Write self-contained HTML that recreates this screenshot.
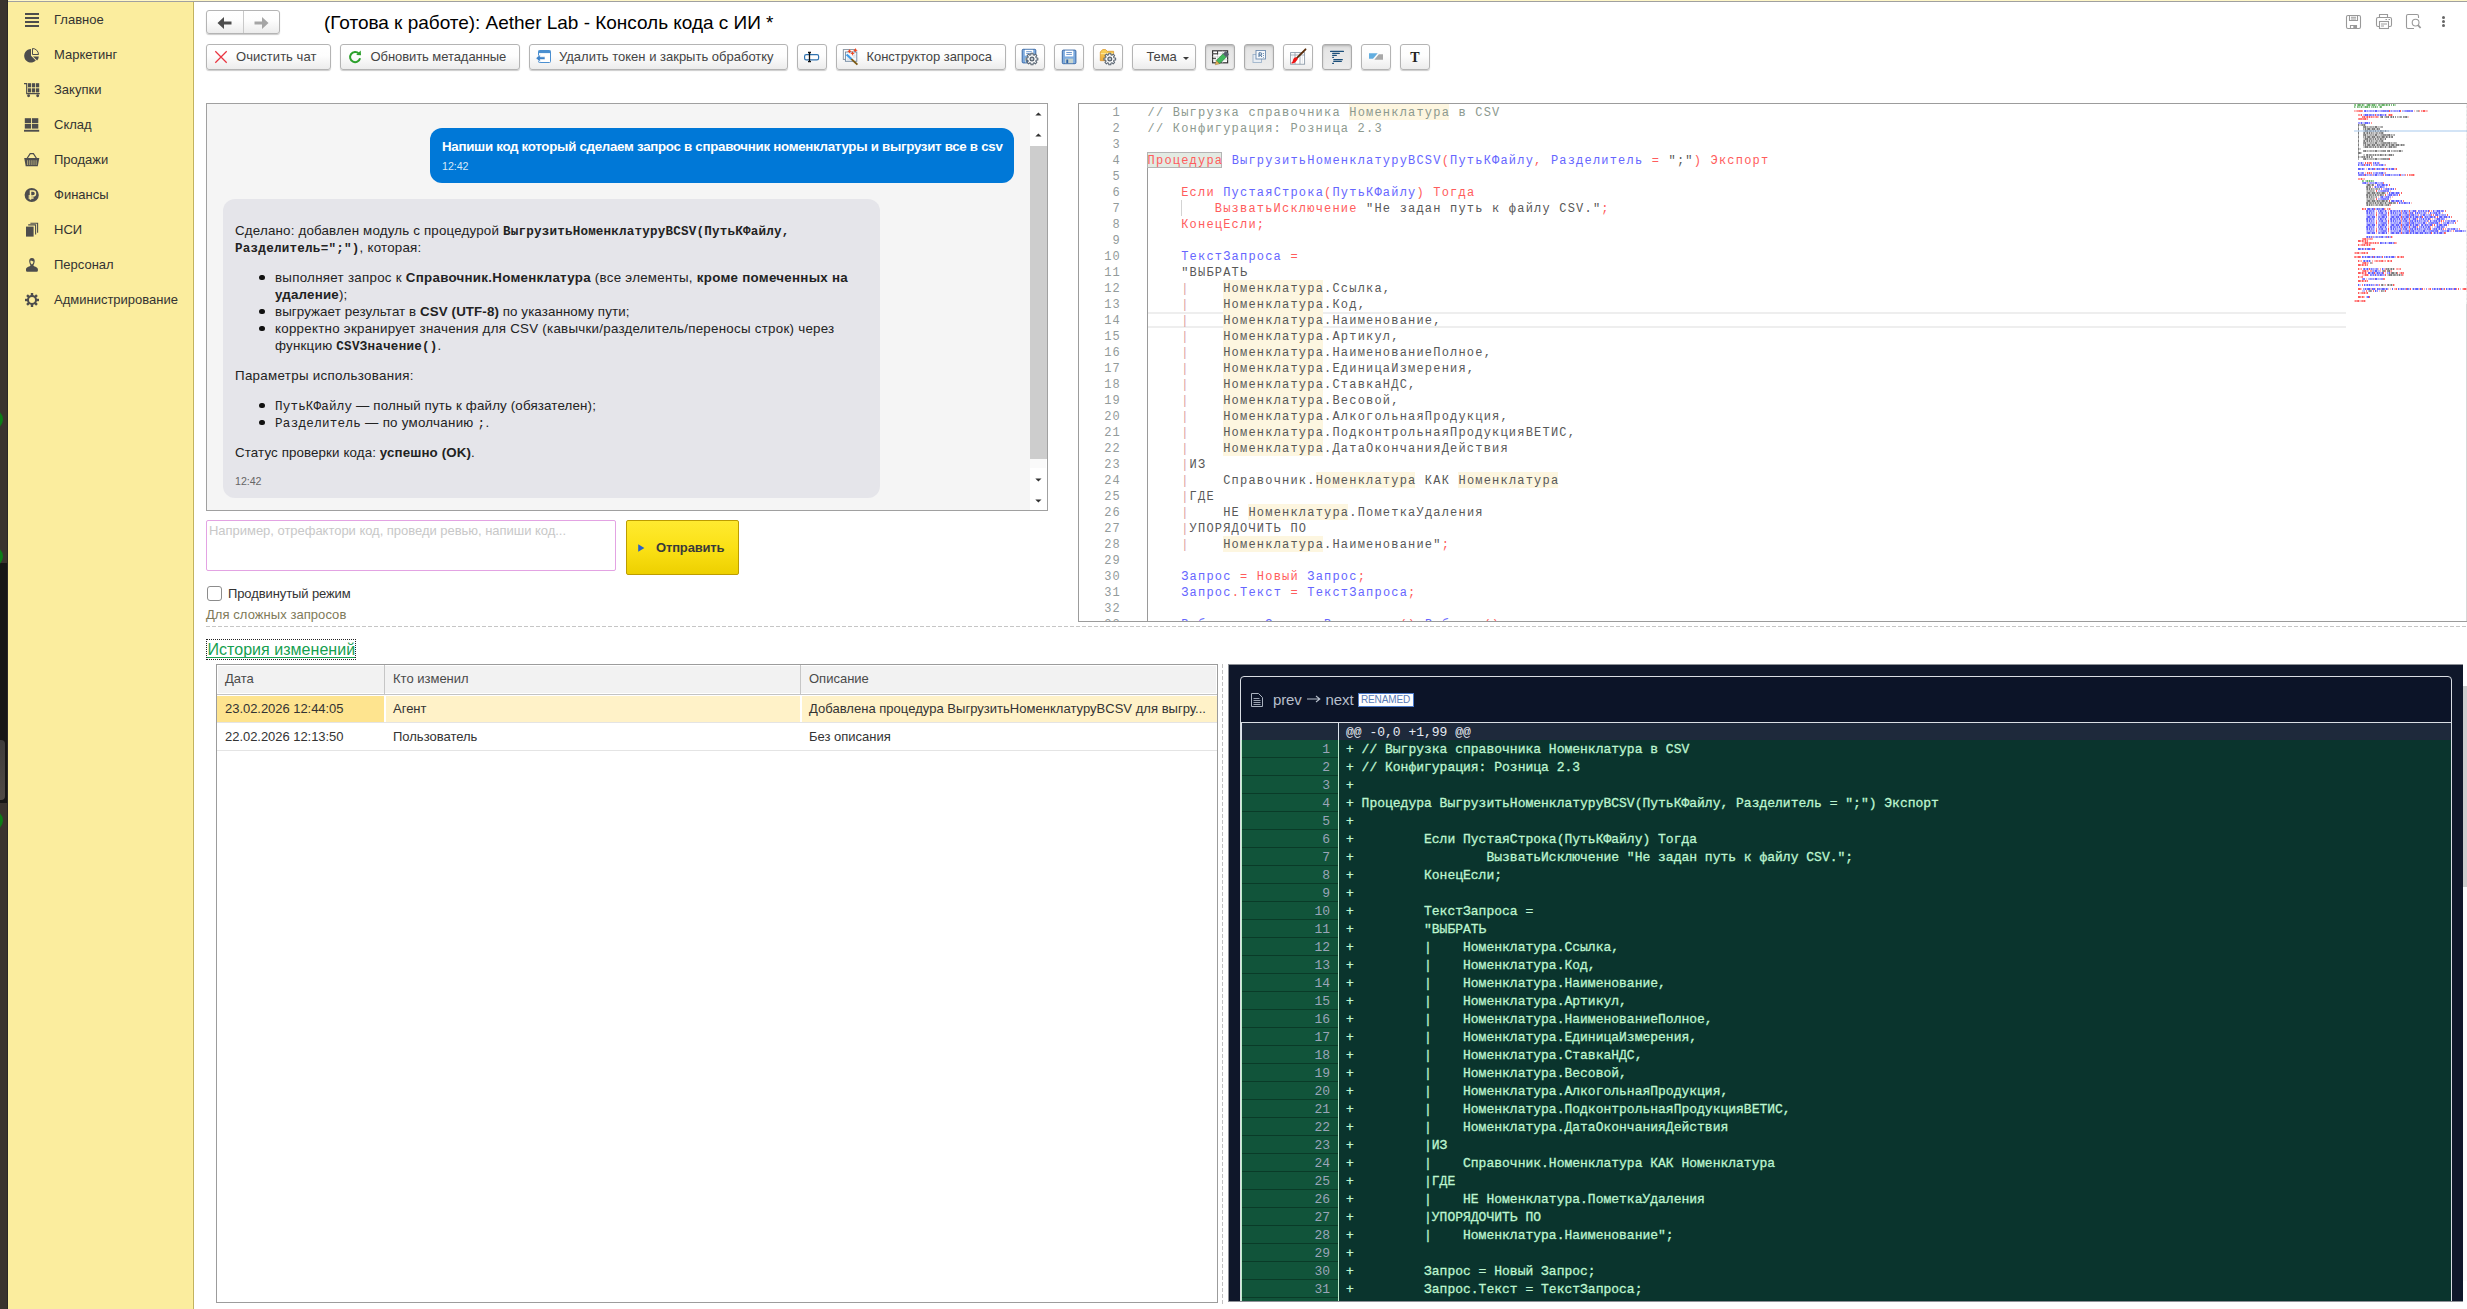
<!DOCTYPE html>
<html lang="ru"><head><meta charset="utf-8"><title>Aether Lab</title><style>
html,body{margin:0;padding:0;background:#fff}
body{width:2467px;height:1309px;position:relative;overflow:hidden;font-family:'Liberation Sans',sans-serif}
div,svg,span.t,span.ln,span.cl,span.dl,span.dn{position:absolute}
span.t{white-space:pre}
span.ln{left:0;width:43px;text-align:right;font:12px/16px 'Liberation Mono',monospace;letter-spacing:1.2px;color:#929a9a}
span.cl{left:69.59999999999991px;white-space:pre;font:12px/16px 'Liberation Mono',monospace;letter-spacing:1.2px}
span.dl{left:105px;white-space:pre;font:13px/18px 'Liberation Mono',monospace;color:#bdf5d0;-webkit-text-stroke:0.3px #bdf5d0}
span.dn{left:0;width:89px;text-align:right;font:13px/18px 'Liberation Mono',monospace;color:#9aa5b8}
</style></head>
<body>
<div style="left:0px;top:0px;width:8px;height:1309px;background:#3a332e"></div>
<div style="left:0px;top:563px;width:8px;height:240px;background:#171615"></div>
<div style="left:-5px;top:740px;width:10px;height:60px;background:linear-gradient(#3e3c3b,#514a45);border-radius:4px"></div>
<div style="left:-18px;top:408.5px;width:21px;height:21px;background:#0c7d16;border-radius:50%"></div>
<div style="left:-18px;top:545.5px;width:21px;height:21px;background:#0c7d16;border-radius:50%"></div>
<div style="left:-18px;top:809.5px;width:21px;height:21px;background:#0c7d16;border-radius:50%"></div>
<div style="left:7px;top:0px;width:1px;height:1309px;background:#2b2724"></div>
<div style="left:8px;top:0px;width:185px;height:1309px;background:#fbed9e"></div>
<div style="left:192px;top:0px;width:1px;height:1309px;background:#fdf09c"></div>
<div style="left:193px;top:0px;width:1px;height:1309px;background:#c2b260"></div>
<div style="left:8px;top:0px;width:2459px;height:1px;background:#fff7c8"></div>
<div style="left:8px;top:1px;width:2459px;height:1px;background:#a0a0a0"></div>
<span class="t" style="left:54px;top:11.5px;font-family:'Liberation Sans',sans-serif;font-size:13px;line-height:16px;color:#333;">Главное</span>
<span class="t" style="left:54px;top:46.5px;font-family:'Liberation Sans',sans-serif;font-size:13px;line-height:16px;color:#333;">Маркетинг</span>
<span class="t" style="left:54px;top:81.5px;font-family:'Liberation Sans',sans-serif;font-size:13px;line-height:16px;color:#333;">Закупки</span>
<span class="t" style="left:54px;top:116.5px;font-family:'Liberation Sans',sans-serif;font-size:13px;line-height:16px;color:#333;">Склад</span>
<span class="t" style="left:54px;top:151.5px;font-family:'Liberation Sans',sans-serif;font-size:13px;line-height:16px;color:#333;">Продажи</span>
<span class="t" style="left:54px;top:186.5px;font-family:'Liberation Sans',sans-serif;font-size:13px;line-height:16px;color:#333;">Финансы</span>
<span class="t" style="left:54px;top:221.5px;font-family:'Liberation Sans',sans-serif;font-size:13px;line-height:16px;color:#333;">НСИ</span>
<span class="t" style="left:54px;top:256.5px;font-family:'Liberation Sans',sans-serif;font-size:13px;line-height:16px;color:#333;">Персонал</span>
<span class="t" style="left:54px;top:291.5px;font-family:'Liberation Sans',sans-serif;font-size:13px;line-height:16px;color:#333;">Администрирование</span>
<svg style="left:24px;top:12px;" width="16" height="16" viewBox="0 0 16 16"><g fill="#4d4d4d" stroke="none"><rect x="1" y="1" width="14" height="2"/><rect x="1" y="5" width="14" height="2"/><rect x="1" y="9" width="14" height="2"/><rect x="1" y="13" width="14" height="2"/></g></svg>
<svg style="left:24px;top:47px;" width="16" height="16" viewBox="0 0 16 16"><g fill="#4d4d4d" stroke="none"><path d="M7,8.8 L7,2 A6.8,6.8 0 1 0 11.8,13.6 Z"/><path d="M9,9.4 L14.8,9.4 A6.8,6.8 0 0 1 13.1,13.4 Z"/><path d="M8.5,1.5 A6,6 0 0 1 14.5,7.5 L8.5,7.5 Z" fill="none" stroke="#4d4d4d" stroke-width="1"/></g></svg>
<svg style="left:24px;top:82px;" width="16" height="16" viewBox="0 0 16 16"><g fill="#4d4d4d" stroke="none"><path d="M0,1.7 H2.7 V11.6 H15.8" fill="none" stroke="#4d4d4d" stroke-width="1.2"/><rect x="4" y="1.2" width="3.2" height="4.1"/><rect x="8" y="1.2" width="3.2" height="4.1"/><rect x="12" y="1.2" width="3.2" height="4.1"/><rect x="4" y="6.3" width="3.2" height="4.1"/><rect x="8" y="6.3" width="3.2" height="4.1"/><rect x="12" y="6.3" width="3.2" height="4.1"/><circle cx="4.6" cy="13.8" r="1.45"/><circle cx="13.7" cy="13.8" r="1.45"/></g></svg>
<svg style="left:24px;top:117px;" width="16" height="16" viewBox="0 0 16 16"><g fill="#4d4d4d" stroke="none"><rect x="0.8" y="1.2" width="6.3" height="4.8"/><rect x="8.0" y="1.2" width="6.3" height="4.8"/><rect x="0.8" y="6.8" width="6.3" height="4.8"/><rect x="8.0" y="6.8" width="6.3" height="4.8"/><rect x="0" y="12.8" width="15.2" height="1.9"/></g></svg>
<svg style="left:24px;top:152px;" width="16" height="16" viewBox="0 0 16 16"><g fill="#4d4d4d" stroke="none"><path d="M3,6.5 L6.2,1.6 H9.4 L12.6,6.5" fill="none" stroke="#4d4d4d" stroke-width="1.2"/><path d="M0.2,6 H15.3 L13.8,14.2 H1.7 Z"/><rect x="3.3" y="8.2" width="0.8" height="4.8" fill="#c9bf85"/><rect x="5.4" y="8.2" width="0.8" height="4.8" fill="#c9bf85"/><rect x="7.5" y="8.2" width="0.8" height="4.8" fill="#c9bf85"/><rect x="9.600000000000001" y="8.2" width="0.8" height="4.8" fill="#c9bf85"/><rect x="11.7" y="8.2" width="0.8" height="4.8" fill="#c9bf85"/></g></svg>
<svg style="left:24px;top:187px;" width="16" height="16" viewBox="0 0 16 16"><g fill="#4d4d4d" stroke="none"><circle cx="7.7" cy="8" r="7.1"/><path d="M6.5,12.8 V4.1 H9 A2.5,2.5 0 0 1 9,9.1 H4.6 M4.6,11 H9.6" fill="none" stroke="#fbed9e" stroke-width="1.5"/></g></svg>
<svg style="left:24px;top:222px;" width="16" height="16" viewBox="0 0 16 16"><g fill="#4d4d4d" stroke="none"><rect x="2" y="4.6" width="7.6" height="10"/><path d="M4.2,2.9 H11.6 V12.6 M6.4,1.2 H13.6 V10.8" fill="none" stroke="#4d4d4d" stroke-width="1.1"/></g></svg>
<svg style="left:24px;top:257px;" width="16" height="16" viewBox="0 0 16 16"><g fill="#4d4d4d" stroke="none"><path d="M7.9,1 C10,1 10.9,2.6 10.7,4.6 C10.5,6.6 9.6,7.9 9.4,8.6 C9.6,9.6 13.6,10 13.9,12.2 V13.6 Q13.9,14.8 12.7,14.8 H3.2 Q2,14.8 2,13.6 V12.2 C2.3,10 6.3,9.6 6.5,8.6 C6.3,7.9 5.4,6.6 5.2,4.6 C5,2.6 5.9,1 7.9,1 Z"/><path d="M6.3,4.6 C6.6,6.4 7.2,7.4 7.9,7.4 C8.6,7.4 9.2,6.4 9.5,4.6 C8.6,4.3 7.4,3.9 6.9,3.3 C6.7,3.7 6.5,4.2 6.3,4.6Z" fill="#fbed9e"/></g></svg>
<svg style="left:24px;top:292px;" width="16" height="16" viewBox="0 0 16 16"><g fill="#4d4d4d" stroke="none"><rect x="6.8" y="1" width="2.4" height="3.2" transform="rotate(0 8 8)"/><rect x="6.8" y="1" width="2.4" height="3.2" transform="rotate(45 8 8)"/><rect x="6.8" y="1" width="2.4" height="3.2" transform="rotate(90 8 8)"/><rect x="6.8" y="1" width="2.4" height="3.2" transform="rotate(135 8 8)"/><rect x="6.8" y="1" width="2.4" height="3.2" transform="rotate(180 8 8)"/><rect x="6.8" y="1" width="2.4" height="3.2" transform="rotate(225 8 8)"/><rect x="6.8" y="1" width="2.4" height="3.2" transform="rotate(270 8 8)"/><rect x="6.8" y="1" width="2.4" height="3.2" transform="rotate(315 8 8)"/><circle cx="8" cy="8" r="4" fill="none" stroke="#4d4d4d" stroke-width="2"/></g></svg>
<div style="left:206px;top:10px;width:74px;height:24px;border:1px solid #b4b4b4;border-radius:3px;background:linear-gradient(#ffffff 0%,#fdfdfd 45%,#ececec 100%);box-shadow:0 1px 1px rgba(0,0,0,.2);box-sizing:border-box;"></div>
<div style="left:243px;top:11px;width:1px;height:22px;background:#c9c9c9"></div>
<svg style="left:216px;top:15.5px;" width="18" height="14" viewBox="0 0 18 14"><path d="M1.5,7 L8,1 V5.6 H15.5 V8.4 H8 V13 Z" fill="#4d4d4d"/></svg>
<svg style="left:252px;top:15.5px;" width="18" height="14" viewBox="0 0 18 14"><path d="M16.5,7 L10,1 V5.6 H2.5 V8.4 H10 V13 Z" fill="#a6a6a6"/></svg>
<span class="t" style="left:324px;top:11.5px;font-family:'Liberation Sans',sans-serif;font-size:19px;line-height:22px;color:#000;letter-spacing:-0.019px;">(Готова к работе): Aether Lab - Консоль кода с ИИ *</span>
<svg style="left:2345px;top:14px;" width="18" height="16" viewBox="0 0 18 16"><g fill="none" stroke="#999" stroke-width="1.1"><rect x="1.5" y="1.5" width="14" height="13" rx="1.5"/><path d="M4.5,1.5 V6.5 H12.5 V1.5 M6,3.3 H11 M6,5 H11 M5.5,14.5 V11.5 H11.5 V14.5"/></g><rect x="8.3" y="12" width="3" height="2.5" fill="#999"/></svg>
<svg style="left:2375px;top:13px;" width="18" height="17" viewBox="0 0 18 17"><g fill="none" stroke="#999" stroke-width="1.1"><path d="M4.5,4.5 V1.5 H12.5 V4.5"/><rect x="1.5" y="4.5" width="15" height="9" rx="1.5"/><rect x="4.5" y="8.5" width="9" height="7" fill="#fff"/><path d="M6,11 H12 M6,13 H9 M10.5,6.5 H12 M13.5,6.5 H15"/></g></svg>
<svg style="left:2405px;top:13px;" width="18" height="17" viewBox="0 0 18 17"><g fill="none" stroke="#999" stroke-width="1.1"><path d="M9,15.5 H3 Q1.5,15.5 1.5,14 V3 Q1.5,1.5 3,1.5 H12 Q13.5,1.5 13.5,3 V5"/><circle cx="10.6" cy="9.6" r="3.4" fill="#fff"/><path d="M13,12.2 L15.6,15" stroke-width="1.8"/></g></svg>
<div style="left:2442px;top:16px;width:3px;height:3px;background:#666;border-radius:50%"></div>
<div style="left:2442px;top:20px;width:3px;height:3px;background:#666;border-radius:50%"></div>
<div style="left:2442px;top:24px;width:3px;height:3px;background:#666;border-radius:50%"></div>
<div style="left:206px;top:44px;width:125px;height:26px;border:1px solid #b4b4b4;border-radius:3px;background:linear-gradient(#ffffff 0%,#fdfdfd 45%,#ececec 100%);box-shadow:0 1px 1px rgba(0,0,0,.2);box-sizing:border-box;"></div>
<svg style="left:214px;top:50px;" width="14" height="14" viewBox="0 0 14 14"><path d="M1.3,1.3 L12.7,12.7 M12.7,1.3 L1.3,12.7" stroke="#e93440" stroke-width="1.25" fill="none"/></svg>
<span class="t" style="left:236px;top:48.5px;font-family:'Liberation Sans',sans-serif;font-size:13px;line-height:16px;color:#444;letter-spacing:0.044px;">Очистить чат</span>
<div style="left:340px;top:44px;width:180px;height:26px;border:1px solid #b4b4b4;border-radius:3px;background:linear-gradient(#ffffff 0%,#fdfdfd 45%,#ececec 100%);box-shadow:0 1px 1px rgba(0,0,0,.2);box-sizing:border-box;"></div>
<svg style="left:347px;top:49px;" width="16" height="16" viewBox="0 0 16 16"><path d="M11.9,4.6 A5.1,5.1 0 1 0 13.1,9.3" fill="none" stroke="#2ca02c" stroke-width="2"/><path d="M9.2,5.9 L14,6.2 L13.7,1.4 Z" fill="#2ca02c"/></svg>
<span class="t" style="left:370.5px;top:48.5px;font-family:'Liberation Sans',sans-serif;font-size:13px;line-height:16px;color:#444;letter-spacing:-0.068px;">Обновить метаданные</span>
<div style="left:529px;top:44px;width:259px;height:26px;border:1px solid #b4b4b4;border-radius:3px;background:linear-gradient(#ffffff 0%,#fdfdfd 45%,#ececec 100%);box-shadow:0 1px 1px rgba(0,0,0,.2);box-sizing:border-box;"></div>
<svg style="left:535px;top:48px;" width="18" height="18" viewBox="0 0 18 18"><rect x="3.5" y="2.5" width="12" height="12" rx="1" fill="#fff" stroke="#4a8fd0" stroke-width="1"/><rect x="3.5" y="2.5" width="12" height="2.6" fill="#4a8fd0"/><path d="M0.8,10.2 L5.2,6.4 V8.8 H10 V11.6 H5.2 V14 Z" fill="#3d82c8" stroke="#fff" stroke-width=".6"/></svg>
<span class="t" style="left:559px;top:48.5px;font-family:'Liberation Sans',sans-serif;font-size:13px;line-height:16px;color:#444;">Удалить токен и закрыть обработку</span>
<div style="left:797px;top:44px;width:30px;height:26px;border:1px solid #b4b4b4;border-radius:3px;background:linear-gradient(#ffffff 0%,#fdfdfd 45%,#ececec 100%);box-shadow:0 1px 1px rgba(0,0,0,.2);box-sizing:border-box;"></div>
<svg style="left:803px;top:50px;" width="18" height="14" viewBox="0 0 18 14"><rect x="1.6" y="4.6" width="14" height="5.2" rx="1.6" fill="#fff" stroke="#2f72b0" stroke-width="1.2"/><path d="M5,2.5 H8 M5,11.6 H8 M6.5,2.5 V11.6" stroke="#111" stroke-width="1.3" fill="none"/></svg>
<div style="left:836px;top:44px;width:170px;height:26px;border:1px solid #b4b4b4;border-radius:3px;background:linear-gradient(#ffffff 0%,#fdfdfd 45%,#ececec 100%);box-shadow:0 1px 1px rgba(0,0,0,.2);box-sizing:border-box;"></div>
<svg style="left:842px;top:47px;" width="18" height="19" viewBox="0 0 18 19"><rect x="1.3" y="2.6" width="11.4" height="9.8" fill="#fff" stroke="#7f8c9a" stroke-width=".9"/><rect x="3.4" y="5" width="11.4" height="9.3" fill="#f6f8fa" stroke="#6f86a0" stroke-width=".9"/><path d="M5,9 H8 M5,11 H8 M5,12.8 H8 M10.5,8.2 H13.5 M11,10 H13.5" stroke="#c5cdd8" stroke-width=".7"/><path d="M9,11.6 L15.4,17.6" stroke="#7d5a14" stroke-width="1.9"/><path d="M4.6,7.4 L9.4,12" stroke="#3d9be8" stroke-width="2.1"/><path d="M7.5,1.9000000000000004 L8.19,3.51 L9.8,4.2 L8.19,4.89 L7.5,6.5 L6.81,4.89 L5.2,4.2 L6.81,3.51Z M13.4,0.9000000000000004 L14.09,2.51 L15.7,3.2 L14.09,3.89 L13.4,5.5 L12.71,3.89 L11.100000000000001,3.2 L12.71,2.51Z M10.5,4.1000000000000005 L11.19,5.71 L12.8,6.4 L11.19,7.09 L10.5,8.7 L9.81,7.09 L8.2,6.4 L9.81,5.71Z" fill="#f0441e"/></svg>
<span class="t" style="left:866.5px;top:48.5px;font-family:'Liberation Sans',sans-serif;font-size:13px;line-height:16px;color:#444;letter-spacing:-0.04px;">Конструктор запроса</span>
<div style="left:1015px;top:44px;width:30px;height:26px;border:1px solid #b4b4b4;border-radius:3px;background:linear-gradient(#ffffff 0%,#fdfdfd 45%,#ececec 100%);box-shadow:0 1px 1px rgba(0,0,0,.2);box-sizing:border-box;"></div>
<svg style="left:1018px;top:45px;" width="24" height="24" viewBox="0 0 24 24"><rect x="4.2" y="4.3" width="13.6" height="13.6" rx="1" fill="#7facdf" stroke="#3a69a7" stroke-width="1"/><rect x="6.800000000000001" y="4.8" width="8.399999999999999" height="5.848" fill="#fff"/><path d="M8.2,6.699999999999999 H13.8 M8.2,8.6 H13.8" stroke="#5c8cca" stroke-width=".9"/><rect x="7.0" y="12.899999999999999" width="8.0" height="4.5" fill="#c6d3cf"/><rect x="8.2" y="13.7" width="1.9" height="3.7" fill="#2f62a6"/><polygon points="12.89,9.85 12.98,8.19 15.02,8.19 15.11,9.85 16.15,10.28 17.38,9.17 18.83,10.62 17.72,11.85 18.15,12.89 19.81,12.98 19.81,15.02 18.15,15.11 17.72,16.15 18.83,17.38 17.38,18.83 16.15,17.72 15.11,18.15 15.02,19.81 12.98,19.81 12.89,18.15 11.85,17.72 10.62,18.83 9.17,17.38 10.28,16.15 9.85,15.11 8.19,15.02 8.19,12.98 9.85,12.89 10.28,11.85 9.17,10.62 10.62,9.17 11.85,10.28" fill="#fdfdfd" stroke="#5f6a76" stroke-width="1.1" stroke-linejoin="round"/><circle cx="14" cy="14" r="1.9" fill="#c3cad1" stroke="#56616d" stroke-width="1.2"/></svg>
<div style="left:1054px;top:44px;width:30px;height:26px;border:1px solid #b4b4b4;border-radius:3px;background:linear-gradient(#ffffff 0%,#fdfdfd 45%,#ececec 100%);box-shadow:0 1px 1px rgba(0,0,0,.2);box-sizing:border-box;"></div>
<svg style="left:1058px;top:45px;" width="24" height="24" viewBox="0 0 24 24"><rect x="4.3" y="5.1" width="13.6" height="13.6" rx="1" fill="#7facdf" stroke="#3a69a7" stroke-width="1"/><rect x="6.9" y="5.6" width="8.399999999999999" height="5.848" fill="#fff"/><path d="M8.3,7.5 H13.899999999999999 M8.3,9.399999999999999 H13.899999999999999" stroke="#5c8cca" stroke-width=".9"/><rect x="7.1" y="13.7" width="8.0" height="4.5" fill="#c6d3cf"/><rect x="8.3" y="14.5" width="1.9" height="3.7" fill="#2f62a6"/></svg>
<div style="left:1093px;top:44px;width:30px;height:26px;border:1px solid #b4b4b4;border-radius:3px;background:linear-gradient(#ffffff 0%,#fdfdfd 45%,#ececec 100%);box-shadow:0 1px 1px rgba(0,0,0,.2);box-sizing:border-box;"></div>
<svg style="left:1096px;top:45px;" width="24" height="24" viewBox="0 0 24 24"><defs><linearGradient id="fg" x1="0" y1="0" x2="0" y2="1"><stop offset="0" stop-color="#fbd65a"/><stop offset="1" stop-color="#eaa93a"/></linearGradient></defs><path d="M4.3,7 L6.6,4.6 H9.6 L11.2,6.3 H17.6 V15.7 H4.3 Z" fill="url(#fg)" stroke="#d9962e" stroke-width=".8"/><path d="M4.8,8.6 H17.2" stroke="#fbe7a6" stroke-width="1"/><polygon points="12.69,9.85 12.78,8.19 14.82,8.19 14.91,9.85 15.95,10.28 17.18,9.17 18.63,10.62 17.52,11.85 17.95,12.89 19.61,12.98 19.61,15.02 17.95,15.11 17.52,16.15 18.63,17.38 17.18,18.83 15.95,17.72 14.91,18.15 14.82,19.81 12.78,19.81 12.69,18.15 11.65,17.72 10.42,18.83 8.97,17.38 10.08,16.15 9.65,15.11 7.99,15.02 7.99,12.98 9.65,12.89 10.08,11.85 8.97,10.62 10.42,9.17 11.65,10.28" fill="#fdfdfd" stroke="#5f6a76" stroke-width="1.1" stroke-linejoin="round"/><circle cx="13.8" cy="14" r="1.9" fill="#c3cad1" stroke="#56616d" stroke-width="1.2"/></svg>
<div style="left:1132px;top:44px;width:64px;height:26px;border:1px solid #b4b4b4;border-radius:3px;background:linear-gradient(#ffffff 0%,#fdfdfd 45%,#ececec 100%);box-shadow:0 1px 1px rgba(0,0,0,.2);box-sizing:border-box;"></div>
<span class="t" style="left:1146.5px;top:48.5px;font-family:'Liberation Sans',sans-serif;font-size:13px;line-height:16px;color:#444;letter-spacing:-0.152px;">Тема</span>
<svg style="left:1183px;top:57px;" width="7" height="4" viewBox="0 0 7 4"><path d="M0,0 H6 L3,3.1 Z" fill="#3a3a3a"/></svg>
<div style="left:1205px;top:44px;width:30px;height:26px;border:1px solid #ababab;border-radius:3px;background:linear-gradient(#dadada 0%,#e6e6e6 25%,#ececec 100%);box-shadow:0 1px 1px rgba(0,0,0,.12), inset 0 1px 2px rgba(0,0,0,.18);box-sizing:border-box;"></div>
<svg style="left:1208px;top:45px;" width="24" height="24" viewBox="0 0 24 24"><rect x="4.6" y="5.8" width="15" height="12" fill="#fff" stroke="#333" stroke-width="1.2"/><path d="M9.6,5.8 V17.8 M14.6,5.8 V17.8 M4.6,8.8 H19.6 M4.6,11.8 H19.6 M4.6,14.8 H19.6" stroke="#cfcfcf" stroke-width=".8"/><path d="M4.6,8.8 H9.6 M4.6,13.3 H8 M9.6,5.8 V9.5" stroke="#333" stroke-width="1"/><path d="M8.27,15.57 L14.97,8.87 L18.23,12.13 L11.53,18.83 Z" fill="#3fb95c" stroke="#2a7a3a" stroke-width=".6"/><path d="M14.97,8.87 L17.2,6.6 Q17.8,6 18.4,6.6 L20.6,8.8 Q21.2,9.4 20.6,10 L18.23,12.13 Z" fill="#55606e"/><path d="M8.27,15.57 L11.53,18.83 L7.3,19.8 Z" fill="#e6b25c" stroke="#8a6a2a" stroke-width=".4"/></svg>
<div style="left:1244px;top:44px;width:30px;height:26px;border:1px solid #ababab;border-radius:3px;background:linear-gradient(#dadada 0%,#e6e6e6 25%,#ececec 100%);box-shadow:0 1px 1px rgba(0,0,0,.12), inset 0 1px 2px rgba(0,0,0,.18);box-sizing:border-box;"></div>
<svg style="left:1249px;top:47.2px;" width="20" height="20" viewBox="0 0 20 20"><rect x="4" y="7.5" width="8.5" height="8" fill="#e8edf3" stroke="#9fb4cb" stroke-width=".9"/><rect x="7" y="3.5" width="9.5" height="8.5" fill="#f6f8fb" stroke="#6d8cb0" stroke-width=".9"/><path d="M10,10 V5.8 H11.7 Q12.8,5.8 12.8,6.9 Q12.8,8 11.7,8 H10 M11.6,8 L12.9,10" fill="none" stroke="#34608f" stroke-width=".9"/><path d="M14.5,6 V6.8 M14.5,8.2 V9 M14.5,10 V10.6" stroke="#34608f" stroke-width=".8"/></svg>
<div style="left:1283px;top:44px;width:30px;height:26px;border:1px solid #b4b4b4;border-radius:3px;background:linear-gradient(#ffffff 0%,#fdfdfd 45%,#ececec 100%);box-shadow:0 1px 1px rgba(0,0,0,.2);box-sizing:border-box;"></div>
<svg style="left:1288px;top:46px;" width="22" height="21" viewBox="0 0 22 21"><rect x="2.6" y="6.6" width="14" height="11.6" fill="#fff" stroke="#8d9aa8" stroke-width=".9"/><path d="M2.6,9 H16.6 M7,6.6 V18.2 M12,6.6 V18.2" stroke="#8d9aa8" stroke-width=".8"/><path d="M4.8,10.5 V17 M14.3,10.5 V17" stroke="#b6bec8" stroke-width=".7" stroke-dasharray="1 1"/><path d="M9,11.8 L17.5,3.3" stroke="#5a2d0c" stroke-width="1.9" stroke-linecap="round"/><path d="M8.2,11.2 C6.2,11.4 5.2,12.8 5,14.2 C4.8,15.6 4,16.6 2.6,17 C4.6,17.8 6.4,17.4 7.6,16 C8.6,14.8 9.6,14.2 9.8,12.6 Z" fill="#ee1414"/></svg>
<div style="left:1322px;top:44px;width:30px;height:26px;border:1px solid #ababab;border-radius:3px;background:linear-gradient(#dadada 0%,#e6e6e6 25%,#ececec 100%);box-shadow:0 1px 1px rgba(0,0,0,.12), inset 0 1px 2px rgba(0,0,0,.18);box-sizing:border-box;"></div>
<svg style="left:1326px;top:46px;" width="22" height="21" viewBox="0 0 22 21"><rect x="4" y="4.7" width="14" height="1.25" rx=".5" fill="#1c4f7a"/><rect x="6.1" y="6.8" width="7.8" height="1.25" rx=".5" fill="#1c4f7a"/><rect x="6.1" y="8.8" width="4.8" height="1.25" rx=".5" fill="#1c4f7a"/><rect x="6.1" y="10.8" width="1.9" height="1.25" rx=".5" fill="#1c4f7a"/><rect x="7.2" y="12.9" width="9.7" height="1.25" rx=".5" fill="#1c4f7a"/><rect x="7.2" y="14.8" width="8.7" height="1.25" rx=".5" fill="#1c4f7a"/><rect x="6.1" y="16.8" width="1.9" height="1.25" rx=".5" fill="#1c4f7a"/></svg>
<div style="left:1361px;top:44px;width:30px;height:26px;border:1px solid #b4b4b4;border-radius:3px;background:linear-gradient(#ffffff 0%,#fdfdfd 45%,#ececec 100%);box-shadow:0 1px 1px rgba(0,0,0,.2);box-sizing:border-box;"></div>
<svg style="left:1366px;top:47px;" width="20" height="20" viewBox="0 0 20 20"><path d="M3,6.2 H11.7 L7,11.7 H3 Z" fill="#62aee0"/><path d="M12.8,7.2 H17 V12.8 H8.3 Z" fill="#a8a8a8"/></svg>
<div style="left:1400px;top:44px;width:30px;height:26px;border:1px solid #b4b4b4;border-radius:3px;background:linear-gradient(#ffffff 0%,#fdfdfd 45%,#ececec 100%);box-shadow:0 1px 1px rgba(0,0,0,.2);box-sizing:border-box;"></div>
<span class="t" style="left:1410.3px;top:49.5px;font-family:'Liberation Serif',serif;font-size:14px;font-weight:bold;line-height:16px;color:#222;">T</span>
<div style="left:206px;top:103px;width:842px;height:408px;background:#f5f5f5;border:1px solid #a0a0a0;box-sizing:border-box"></div>
<div style="left:1030px;top:104px;width:17px;height:406px;background:#fff"></div>
<div style="left:1030px;top:146px;width:17px;height:313px;background:#cdcdcd"></div>
<div style="left:1030px;top:459px;width:16px;height:9px;background:#fafafa"></div>
<svg style="left:1035px;top:112.0px;" width="7" height="4" viewBox="0 0 7 4"><path d="M0.3,3.6 L3.4,0.4 L6.5,3.6 Z" fill="#333"/></svg>
<svg style="left:1035px;top:133.0px;" width="7" height="4" viewBox="0 0 7 4"><path d="M0.3,3.6 L3.4,0.4 L6.5,3.6 Z" fill="#333"/></svg>
<svg style="left:1035px;top:477.5px;" width="7" height="4" viewBox="0 0 7 4"><path d="M0.3,0.4 L3.4,3.6 L6.5,0.4 Z" fill="#333"/></svg>
<svg style="left:1035px;top:498.5px;" width="7" height="4" viewBox="0 0 7 4"><path d="M0.3,0.4 L3.4,3.6 L6.5,0.4 Z" fill="#333"/></svg>
<div style="left:430px;top:128px;width:584px;height:55px;background:#0078d7;border-radius:12px"></div>
<span class="t" style="left:442px;top:138.0px;font-family:'Liberation Sans',sans-serif;font-size:13.33px;font-weight:bold;line-height:17px;color:#fff;letter-spacing:-0.3px;">Напиши код который сделаем запрос в справочник номенклатуры и выгрузит все в csv</span>
<span class="t" style="left:442px;top:160.0px;font-family:'Liberation Sans',sans-serif;font-size:10.67px;line-height:13px;color:#d6e9f9;letter-spacing:-0.034px;">12:42</span>
<div style="left:223px;top:199px;width:657px;height:299px;background:#e5e5ea;border-radius:12px"></div>
<span class="t" style="left:235px;top:222.0px;font-family:'Liberation Sans',sans-serif;font-size:13.33px;line-height:17px;color:#222;letter-spacing:0.187px;">Сделано: добавлен модуль с процедурой <b style="font-family:'Liberation Mono',monospace;font-size:12.6px">ВыгрузитьНоменклатуруВCSV(ПутьКФайлу,</b></span>
<span class="t" style="left:235px;top:239.0px;font-family:'Liberation Sans',sans-serif;font-size:13.33px;line-height:17px;color:#222;letter-spacing:0.229px;"><b style="font-family:'Liberation Mono',monospace;font-size:12.6px">Разделитель=";")</b>, которая:</span>
<div style="left:259.2px;top:274.7px;width:5.6px;height:5.6px;background:#111;border-radius:50%"></div>
<div style="left:259.2px;top:308.7px;width:5.6px;height:5.6px;background:#111;border-radius:50%"></div>
<div style="left:259.2px;top:325.7px;width:5.6px;height:5.6px;background:#111;border-radius:50%"></div>
<div style="left:259.2px;top:402.7px;width:5.6px;height:5.6px;background:#111;border-radius:50%"></div>
<div style="left:259.2px;top:419.7px;width:5.6px;height:5.6px;background:#111;border-radius:50%"></div>
<span class="t" style="left:275px;top:269.0px;font-family:'Liberation Sans',sans-serif;font-size:13.33px;line-height:17px;color:#222;letter-spacing:0.275px;">выполняет запрос к <b>Справочник.Номенклатура</b> (все элементы, <b>кроме помеченных на</b></span>
<span class="t" style="left:275px;top:286.0px;font-family:'Liberation Sans',sans-serif;font-size:13.33px;line-height:17px;color:#222;letter-spacing:0.202px;"><b>удаление</b>);</span>
<span class="t" style="left:275px;top:303.0px;font-family:'Liberation Sans',sans-serif;font-size:13.33px;line-height:17px;color:#222;letter-spacing:0.099px;">выгружает результат в <b>CSV (UTF-8)</b> по указанному пути;</span>
<span class="t" style="left:275px;top:320.0px;font-family:'Liberation Sans',sans-serif;font-size:13.33px;line-height:17px;color:#222;letter-spacing:0.264px;">корректно экранирует значения для CSV (кавычки/разделитель/переносы строк) через</span>
<span class="t" style="left:275px;top:337.0px;font-family:'Liberation Sans',sans-serif;font-size:13.33px;line-height:17px;color:#222;letter-spacing:0.232px;">функцию <b style="font-family:'Liberation Mono',monospace;font-size:12.6px">CSVЗначение()</b>.</span>
<span class="t" style="left:235px;top:367.0px;font-family:'Liberation Sans',sans-serif;font-size:13.33px;line-height:17px;color:#222;letter-spacing:0.306px;">Параметры использования:</span>
<span class="t" style="left:275px;top:397.0px;font-family:'Liberation Sans',sans-serif;font-size:13.33px;line-height:17px;color:#222;letter-spacing:0.154px;"><span style="font-family:'Liberation Mono',monospace;font-size:12.6px">ПутьКФайлу</span> — полный путь к файлу (обязателен);</span>
<span class="t" style="left:275px;top:414.0px;font-family:'Liberation Sans',sans-serif;font-size:13.33px;line-height:17px;color:#222;letter-spacing:0.268px;"><span style="font-family:'Liberation Mono',monospace;font-size:12.6px">Разделитель</span> — по умолчанию <span style="font-family:'Liberation Mono',monospace;font-size:12.6px">;</span>.</span>
<span class="t" style="left:235px;top:444.0px;font-family:'Liberation Sans',sans-serif;font-size:13.33px;line-height:17px;color:#222;letter-spacing:0.113px;">Статус проверки кода: <b>успешно (OK)</b>.</span>
<span class="t" style="left:235px;top:475.0px;font-family:'Liberation Sans',sans-serif;font-size:10.67px;line-height:13px;color:#666;letter-spacing:-0.034px;">12:42</span>
<div style="left:206px;top:520px;width:410px;height:51px;background:#fff;border:1px solid #e3a3e3;border-radius:2px;box-sizing:border-box"></div>
<span class="t" style="left:209px;top:522.5px;font-family:'Liberation Sans',sans-serif;font-size:13px;line-height:16px;color:#c8c8c8;letter-spacing:-0.029px;">Например, отрефактори код, проведи ревью, напиши код...</span>
<div style="left:626px;top:520px;width:113px;height:55px;background:linear-gradient(#ffea30 0%,#fbe116 50%,#edd000 100%);border:1px solid #bd9d00;border-radius:2px;box-sizing:border-box"></div>
<svg style="left:638px;top:543.5px;" width="7" height="8" viewBox="0 0 7 8"><path d="M0.2,0.3 L6.4,4 L0.2,7.7 Z" fill="#2a62c9"/></svg>
<span class="t" style="left:656px;top:539.5px;font-family:'Liberation Sans',sans-serif;font-size:13px;font-weight:bold;line-height:16px;color:#3a3a3a;letter-spacing:-0.16px;">Отправить</span>
<div style="left:207px;top:586px;width:15px;height:15px;background:#fff;border:1px solid #8c8c8c;border-radius:3px;box-sizing:border-box"></div>
<span class="t" style="left:228px;top:585.5px;font-family:'Liberation Sans',sans-serif;font-size:13px;line-height:16px;color:#333;letter-spacing:-0.103px;">Продвинутый режим</span>
<span class="t" style="left:206px;top:606.5px;font-family:'Liberation Sans',sans-serif;font-size:13px;line-height:16px;color:#807a59;letter-spacing:0.061px;">Для сложных запросов</span>
<div style="left:206px;top:626px;width:2261px;height:1px;background:repeating-linear-gradient(90deg,#c6c6c6 0 4px,transparent 4px 6px)"></div>
<div style="left:206px;top:639px;width:150px;height:21px;border:1px dotted #222;box-sizing:border-box"></div>
<span class="t" style="left:207.5px;top:640.0px;font-family:'Liberation Sans',sans-serif;font-size:16px;line-height:19px;color:#16a050;letter-spacing:0.029px;">История изменений</span>
<div style="left:207px;top:657px;width:148px;height:1px;background:#16a050"></div>
<div style="left:216px;top:664px;width:1002px;height:639px;background:#fff;border:1px solid #9c9c9c;box-sizing:border-box"></div>
<div style="left:218px;top:666px;width:998px;height:27px;background:#f2f2f2"></div>
<div style="left:384px;top:665px;width:1px;height:29px;background:#c6c6c6"></div>
<div style="left:800px;top:665px;width:1px;height:29px;background:#c6c6c6"></div>
<div style="left:217px;top:694px;width:1000px;height:1px;background:#c4c4c4"></div>
<span class="t" style="left:225px;top:670.5px;font-family:'Liberation Sans',sans-serif;font-size:13px;line-height:16px;color:#4a4a4a;">Дата</span>
<span class="t" style="left:393px;top:670.5px;font-family:'Liberation Sans',sans-serif;font-size:13px;line-height:16px;color:#4a4a4a;">Кто изменил</span>
<span class="t" style="left:809px;top:670.5px;font-family:'Liberation Sans',sans-serif;font-size:13px;line-height:16px;color:#4a4a4a;">Описание</span>
<div style="left:217px;top:696px;width:1000px;height:26px;background:#fff2c8"></div>
<div style="left:217px;top:696px;width:167px;height:26px;background:#fee48f"></div>
<div style="left:384px;top:696px;width:2px;height:26px;background:#fff"></div>
<div style="left:800px;top:696px;width:2px;height:26px;background:#fff"></div>
<div style="left:217px;top:722px;width:1000px;height:1px;background:#e4e4e4"></div>
<div style="left:217px;top:750px;width:1000px;height:1px;background:#e4e4e4"></div>
<span class="t" style="left:225px;top:700.5px;font-family:'Liberation Sans',sans-serif;font-size:13px;line-height:16px;color:#333;letter-spacing:-0.041px;">23.02.2026 12:44:05</span>
<span class="t" style="left:393px;top:700.5px;font-family:'Liberation Sans',sans-serif;font-size:13px;line-height:16px;color:#333;">Агент</span>
<span class="t" style="left:809px;top:700.5px;font-family:'Liberation Sans',sans-serif;font-size:13px;line-height:16px;color:#333;letter-spacing:0.028px;">Добавлена процедура ВыгрузитьНоменклатуруВCSV для выгру...</span>
<span class="t" style="left:225px;top:728.5px;font-family:'Liberation Sans',sans-serif;font-size:13px;line-height:16px;color:#333;letter-spacing:-0.041px;">22.02.2026 12:13:50</span>
<span class="t" style="left:393px;top:728.5px;font-family:'Liberation Sans',sans-serif;font-size:13px;line-height:16px;color:#333;">Пользователь</span>
<span class="t" style="left:809px;top:728.5px;font-family:'Liberation Sans',sans-serif;font-size:13px;line-height:16px;color:#333;">Без описания</span>
<div style="left:1222px;top:664px;width:1px;height:640px;background:repeating-linear-gradient(180deg,#c2c2c2 0 4px,transparent 4px 6px)"></div>
<div style="left:1078px;top:103px;width:1400px;height:519px;background:#fff;border:1px solid #9c9c9c;box-sizing:border-box"></div>
<div style="left:2466px;top:104px;width:1px;height:517px;background:#d8d8d8"></div>
<div style="left:1147.6px;top:312px;width:1198px;height:16px;border-top:2px solid #eeeeee;border-bottom:2px solid #eeeeee;box-sizing:border-box"></div>
<div style="left:1147px;top:152px;width:75px;height:16px;background:#e3ebe3;border:1px solid #b4b4b4;box-sizing:border-box"></div>
<div style="left:1147px;top:168px;width:1px;height:453px;background:#9a9a9a"></div>
<div style="left:1181px;top:200px;width:1px;height:16px;background:#d3d3d3"></div>
<div style="left:1078px;top:103px;width:1389px;height:518px;overflow:hidden"><span class="ln" style="top:2px">1</span><div style="left:271.2px;top:1px;width:99.8px;height:16px;background:#fdf6e0"></div><span class="cl" style="top:2px"><span style="color:#8c998f">// Выгрузка справочника </span><span style="color:#8c998f">Номенклатура</span><span style="color:#8c998f"> в CSV</span></span><span class="ln" style="top:18px">2</span><span class="cl" style="top:18px"><span style="color:#8c998f">// Конфигурация: Розница 2.3</span></span><span class="ln" style="top:34px">3</span><span class="ln" style="top:50px">4</span><span class="cl" style="top:50px"><span style="color:#ff5c5c">Процедура</span> <span style="color:#6666ff">ВыгрузитьНоменклатуруВCSV</span><span style="color:#ff5c5c">(</span><span style="color:#6666ff">ПутьКФайлу</span><span style="color:#ff5c5c">, </span><span style="color:#6666ff">Разделитель</span><span style="color:#ff5c5c"> = </span><span style="color:#585858">";"</span><span style="color:#ff5c5c">) </span><span style="color:#ff5c5c">Экспорт</span></span><span class="ln" style="top:66px">5</span><span class="ln" style="top:82px">6</span><span class="cl" style="top:82px">    <span style="color:#ff5c5c">Если</span> <span style="color:#6666ff">ПустаяСтрока</span><span style="color:#ff5c5c">(</span><span style="color:#6666ff">ПутьКФайлу</span><span style="color:#ff5c5c">) </span><span style="color:#ff5c5c">Тогда</span></span><span class="ln" style="top:98px">7</span><span class="cl" style="top:98px">        <span style="color:#ff5c5c">ВызватьИсключение</span> <span style="color:#585858">"Не задан путь к файлу CSV."</span><span style="color:#ff5c5c">;</span></span><span class="ln" style="top:114px">8</span><span class="cl" style="top:114px">    <span style="color:#ff5c5c">КонецЕсли;</span></span><span class="ln" style="top:130px">9</span><span class="ln" style="top:146px">10</span><span class="cl" style="top:146px">    <span style="color:#6666ff">ТекстЗапроса</span><span style="color:#ff5c5c"> =</span></span><span class="ln" style="top:162px">11</span><span class="cl" style="top:162px">    <span style="color:#585858">"ВЫБРАТЬ</span></span><span class="ln" style="top:178px">12</span><div style="left:145.2px;top:177px;width:99.8px;height:16px;background:#fdf6e0"></div><span class="cl" style="top:178px">    <span style="color:#dba0a0">|</span>    <span style="color:#585858">Номенклатура</span><span style="color:#585858">.Ссылка,</span></span><span class="ln" style="top:194px">13</span><div style="left:145.2px;top:193px;width:99.8px;height:16px;background:#fdf6e0"></div><span class="cl" style="top:194px">    <span style="color:#dba0a0">|</span>    <span style="color:#585858">Номенклатура</span><span style="color:#585858">.Код,</span></span><span class="ln" style="top:210px">14</span><div style="left:145.2px;top:209px;width:99.8px;height:16px;background:#fdf6e0"></div><span class="cl" style="top:210px">    <span style="color:#dba0a0">|</span>    <span style="color:#585858">Номенклатура</span><span style="color:#585858">.Наименование,</span></span><span class="ln" style="top:226px">15</span><div style="left:145.2px;top:225px;width:99.8px;height:16px;background:#fdf6e0"></div><span class="cl" style="top:226px">    <span style="color:#dba0a0">|</span>    <span style="color:#585858">Номенклатура</span><span style="color:#585858">.Артикул,</span></span><span class="ln" style="top:242px">16</span><div style="left:145.2px;top:241px;width:99.8px;height:16px;background:#fdf6e0"></div><span class="cl" style="top:242px">    <span style="color:#dba0a0">|</span>    <span style="color:#585858">Номенклатура</span><span style="color:#585858">.НаименованиеПолное,</span></span><span class="ln" style="top:258px">17</span><div style="left:145.2px;top:257px;width:99.8px;height:16px;background:#fdf6e0"></div><span class="cl" style="top:258px">    <span style="color:#dba0a0">|</span>    <span style="color:#585858">Номенклатура</span><span style="color:#585858">.ЕдиницаИзмерения,</span></span><span class="ln" style="top:274px">18</span><div style="left:145.2px;top:273px;width:99.8px;height:16px;background:#fdf6e0"></div><span class="cl" style="top:274px">    <span style="color:#dba0a0">|</span>    <span style="color:#585858">Номенклатура</span><span style="color:#585858">.СтавкаНДС,</span></span><span class="ln" style="top:290px">19</span><div style="left:145.2px;top:289px;width:99.8px;height:16px;background:#fdf6e0"></div><span class="cl" style="top:290px">    <span style="color:#dba0a0">|</span>    <span style="color:#585858">Номенклатура</span><span style="color:#585858">.Весовой,</span></span><span class="ln" style="top:306px">20</span><div style="left:145.2px;top:305px;width:99.8px;height:16px;background:#fdf6e0"></div><span class="cl" style="top:306px">    <span style="color:#dba0a0">|</span>    <span style="color:#585858">Номенклатура</span><span style="color:#585858">.АлкогольнаяПродукция,</span></span><span class="ln" style="top:322px">21</span><div style="left:145.2px;top:321px;width:99.8px;height:16px;background:#fdf6e0"></div><span class="cl" style="top:322px">    <span style="color:#dba0a0">|</span>    <span style="color:#585858">Номенклатура</span><span style="color:#585858">.ПодконтрольнаяПродукцияВЕТИС,</span></span><span class="ln" style="top:338px">22</span><div style="left:145.2px;top:337px;width:99.8px;height:16px;background:#fdf6e0"></div><span class="cl" style="top:338px">    <span style="color:#dba0a0">|</span>    <span style="color:#585858">Номенклатура</span><span style="color:#585858">.ДатаОкончанияДействия</span></span><span class="ln" style="top:354px">23</span><span class="cl" style="top:354px">    <span style="color:#dba0a0">|</span><span style="color:#585858">ИЗ</span></span><span class="ln" style="top:370px">24</span><div style="left:237.6px;top:369px;width:99.8px;height:16px;background:#fdf6e0"></div><div style="left:380.4px;top:369px;width:99.8px;height:16px;background:#fdf6e0"></div><span class="cl" style="top:370px">    <span style="color:#dba0a0">|</span>    <span style="color:#585858">Справочник.</span><span style="color:#585858">Номенклатура</span><span style="color:#585858"> КАК </span><span style="color:#585858">Номенклатура</span></span><span class="ln" style="top:386px">25</span><span class="cl" style="top:386px">    <span style="color:#dba0a0">|</span><span style="color:#585858">ГДЕ</span></span><span class="ln" style="top:402px">26</span><div style="left:170.4px;top:401px;width:99.8px;height:16px;background:#fdf6e0"></div><span class="cl" style="top:402px">    <span style="color:#dba0a0">|</span>    <span style="color:#585858">НЕ </span><span style="color:#585858">Номенклатура</span><span style="color:#585858">.ПометкаУдаления</span></span><span class="ln" style="top:418px">27</span><span class="cl" style="top:418px">    <span style="color:#dba0a0">|</span><span style="color:#585858">УПОРЯДОЧИТЬ ПО</span></span><span class="ln" style="top:434px">28</span><div style="left:145.2px;top:433px;width:99.8px;height:16px;background:#fdf6e0"></div><span class="cl" style="top:434px">    <span style="color:#dba0a0">|</span>    <span style="color:#585858">Номенклатура</span><span style="color:#585858">.Наименование"</span><span style="color:#ff5c5c">;</span></span><span class="ln" style="top:450px">29</span><span class="ln" style="top:466px">30</span><span class="cl" style="top:466px">    <span style="color:#6666ff">Запрос</span><span style="color:#ff5c5c"> = </span><span style="color:#ff5c5c">Новый</span> <span style="color:#6666ff">Запрос</span><span style="color:#ff5c5c">;</span></span><span class="ln" style="top:482px">31</span><span class="cl" style="top:482px">    <span style="color:#6666ff">Запрос</span><span style="color:#ff5c5c">.</span><span style="color:#6666ff">Текст</span><span style="color:#ff5c5c"> = </span><span style="color:#6666ff">ТекстЗапроса</span><span style="color:#ff5c5c">;</span></span><span class="ln" style="top:498px">32</span><span class="ln" style="top:514px">33</span><span class="cl" style="top:514px">    <span style="color:#6666ff">Выборка</span><span style="color:#ff5c5c"> = </span><span style="color:#6666ff">Запрос</span><span style="color:#ff5c5c">.</span><span style="color:#6666ff">Выполнить</span><span style="color:#ff5c5c">().</span><span style="color:#6666ff">Выбрать</span><span style="color:#ff5c5c">();</span></span></div>
<svg style="left:2354px;top:104px;" width="113" height="200" viewBox="0 0 113 200"><defs><pattern id="mmp" width="24" height="8" patternUnits="userSpaceOnUse"><rect x="0" y="0" width="1" height="2" fill="#fff" opacity="0.45"/><rect x="1" y="0" width="1" height="2" fill="#fff" opacity="0.3"/><rect x="2" y="0" width="1" height="2" fill="#fff" opacity="0.6"/><rect x="3" y="0" width="1" height="2" fill="#fff" opacity="0.5"/><rect x="4" y="0" width="1" height="2" fill="#fff" opacity="0.15"/><rect x="5" y="0" width="1" height="2" fill="#fff" opacity="0.15"/><rect x="6" y="0" width="1" height="2" fill="#fff" opacity="0.35"/><rect x="7" y="0" width="1" height="2" fill="#fff" opacity="0.7"/><rect x="8" y="0" width="1" height="2" fill="#fff" opacity="0.15"/><rect x="9" y="0" width="1" height="2" fill="#fff" opacity="0.45"/><rect x="10" y="0" width="1" height="2" fill="#fff" opacity="0.7"/><rect x="11" y="0" width="1" height="2" fill="#fff" opacity="0.15"/><rect x="12" y="0" width="1" height="2" fill="#fff" opacity="0.7"/><rect x="13" y="0" width="1" height="2" fill="#fff" opacity="0.3"/><rect x="14" y="0" width="1" height="2" fill="#fff" opacity="0.15"/><rect x="15" y="0" width="1" height="2" fill="#fff" opacity="0.15"/><rect x="16" y="0" width="1" height="2" fill="#fff" opacity="0.6"/><rect x="17" y="0" width="1" height="2" fill="#fff" opacity="0.6"/><rect x="18" y="0" width="1" height="2" fill="#fff" opacity="0.15"/><rect x="19" y="0" width="1" height="2" fill="#fff" opacity="0.3"/><rect x="20" y="0" width="1" height="2" fill="#fff" opacity="0.15"/><rect x="21" y="0" width="1" height="2" fill="#fff" opacity="0.7"/><rect x="22" y="0" width="1" height="2" fill="#fff" opacity="0.6"/><rect x="23" y="0" width="1" height="2" fill="#fff" opacity="0.15"/><rect x="0" y="2" width="1" height="2" fill="#fff" opacity="0.35"/><rect x="1" y="2" width="1" height="2" fill="#fff" opacity="0.7"/><rect x="2" y="2" width="1" height="2" fill="#fff" opacity="0.15"/><rect x="3" y="2" width="1" height="2" fill="#fff" opacity="0.3"/><rect x="4" y="2" width="1" height="2" fill="#fff" opacity="0.5"/><rect x="5" y="2" width="1" height="2" fill="#fff" opacity="0.5"/><rect x="6" y="2" width="1" height="2" fill="#fff" opacity="0.7"/><rect x="7" y="2" width="1" height="2" fill="#fff" opacity="0.15"/><rect x="8" y="2" width="1" height="2" fill="#fff" opacity="0.7"/><rect x="9" y="2" width="1" height="2" fill="#fff" opacity="0.7"/><rect x="10" y="2" width="1" height="2" fill="#fff" opacity="0.6"/><rect x="11" y="2" width="1" height="2" fill="#fff" opacity="0.15"/><rect x="12" y="2" width="1" height="2" fill="#fff" opacity="0.3"/><rect x="13" y="2" width="1" height="2" fill="#fff" opacity="0.15"/><rect x="14" y="2" width="1" height="2" fill="#fff" opacity="0.7"/><rect x="15" y="2" width="1" height="2" fill="#fff" opacity="0.35"/><rect x="16" y="2" width="1" height="2" fill="#fff" opacity="0.3"/><rect x="17" y="2" width="1" height="2" fill="#fff" opacity="0.45"/><rect x="18" y="2" width="1" height="2" fill="#fff" opacity="0.6"/><rect x="19" y="2" width="1" height="2" fill="#fff" opacity="0.3"/><rect x="20" y="2" width="1" height="2" fill="#fff" opacity="0.7"/><rect x="21" y="2" width="1" height="2" fill="#fff" opacity="0.15"/><rect x="22" y="2" width="1" height="2" fill="#fff" opacity="0.7"/><rect x="23" y="2" width="1" height="2" fill="#fff" opacity="0.45"/><rect x="0" y="4" width="1" height="2" fill="#fff" opacity="0.7"/><rect x="1" y="4" width="1" height="2" fill="#fff" opacity="0.35"/><rect x="2" y="4" width="1" height="2" fill="#fff" opacity="0.5"/><rect x="3" y="4" width="1" height="2" fill="#fff" opacity="0.3"/><rect x="4" y="4" width="1" height="2" fill="#fff" opacity="0.15"/><rect x="5" y="4" width="1" height="2" fill="#fff" opacity="0.7"/><rect x="6" y="4" width="1" height="2" fill="#fff" opacity="0.7"/><rect x="7" y="4" width="1" height="2" fill="#fff" opacity="0.5"/><rect x="8" y="4" width="1" height="2" fill="#fff" opacity="0.3"/><rect x="9" y="4" width="1" height="2" fill="#fff" opacity="0.45"/><rect x="10" y="4" width="1" height="2" fill="#fff" opacity="0.15"/><rect x="11" y="4" width="1" height="2" fill="#fff" opacity="0.7"/><rect x="12" y="4" width="1" height="2" fill="#fff" opacity="0.5"/><rect x="13" y="4" width="1" height="2" fill="#fff" opacity="0.15"/><rect x="14" y="4" width="1" height="2" fill="#fff" opacity="0.7"/><rect x="15" y="4" width="1" height="2" fill="#fff" opacity="0.15"/><rect x="16" y="4" width="1" height="2" fill="#fff" opacity="0.7"/><rect x="17" y="4" width="1" height="2" fill="#fff" opacity="0.3"/><rect x="18" y="4" width="1" height="2" fill="#fff" opacity="0.6"/><rect x="19" y="4" width="1" height="2" fill="#fff" opacity="0.5"/><rect x="20" y="4" width="1" height="2" fill="#fff" opacity="0.7"/><rect x="21" y="4" width="1" height="2" fill="#fff" opacity="0.6"/><rect x="22" y="4" width="1" height="2" fill="#fff" opacity="0.35"/><rect x="23" y="4" width="1" height="2" fill="#fff" opacity="0.45"/><rect x="0" y="6" width="1" height="2" fill="#fff" opacity="0.6"/><rect x="1" y="6" width="1" height="2" fill="#fff" opacity="0.7"/><rect x="2" y="6" width="1" height="2" fill="#fff" opacity="0.6"/><rect x="3" y="6" width="1" height="2" fill="#fff" opacity="0.45"/><rect x="4" y="6" width="1" height="2" fill="#fff" opacity="0.45"/><rect x="5" y="6" width="1" height="2" fill="#fff" opacity="0.3"/><rect x="6" y="6" width="1" height="2" fill="#fff" opacity="0.35"/><rect x="7" y="6" width="1" height="2" fill="#fff" opacity="0.3"/><rect x="8" y="6" width="1" height="2" fill="#fff" opacity="0.5"/><rect x="9" y="6" width="1" height="2" fill="#fff" opacity="0.35"/><rect x="10" y="6" width="1" height="2" fill="#fff" opacity="0.3"/><rect x="11" y="6" width="1" height="2" fill="#fff" opacity="0.15"/><rect x="12" y="6" width="1" height="2" fill="#fff" opacity="0.7"/><rect x="13" y="6" width="1" height="2" fill="#fff" opacity="0.45"/><rect x="14" y="6" width="1" height="2" fill="#fff" opacity="0.7"/><rect x="15" y="6" width="1" height="2" fill="#fff" opacity="0.6"/><rect x="16" y="6" width="1" height="2" fill="#fff" opacity="0.45"/><rect x="17" y="6" width="1" height="2" fill="#fff" opacity="0.5"/><rect x="18" y="6" width="1" height="2" fill="#fff" opacity="0.6"/><rect x="19" y="6" width="1" height="2" fill="#fff" opacity="0.45"/><rect x="20" y="6" width="1" height="2" fill="#fff" opacity="0.7"/><rect x="21" y="6" width="1" height="2" fill="#fff" opacity="0.15"/><rect x="22" y="6" width="1" height="2" fill="#fff" opacity="0.15"/><rect x="23" y="6" width="1" height="2" fill="#fff" opacity="0.7"/></pattern></defs><rect x="0" y="0" width="2" height="2" fill="#1f8f1f" opacity="0.8"/><rect x="3" y="0" width="8" height="2" fill="#1f8f1f" opacity="0.8"/><rect x="12" y="0" width="11" height="2" fill="#1f8f1f" opacity="0.8"/><rect x="24" y="0" width="12" height="2" fill="#1f8f1f" opacity="0.8"/><rect x="37" y="0" width="1" height="2" fill="#1f8f1f" opacity="0.8"/><rect x="39" y="0" width="3" height="2" fill="#1f8f1f" opacity="0.8"/><rect x="0" y="2" width="2" height="2" fill="#1f8f1f" opacity="0.8"/><rect x="3" y="2" width="13" height="2" fill="#1f8f1f" opacity="0.8"/><rect x="17" y="2" width="7" height="2" fill="#1f8f1f" opacity="0.8"/><rect x="25" y="2" width="3" height="2" fill="#1f8f1f" opacity="0.8"/><rect x="0" y="6" width="9" height="2" fill="#ff1010" opacity="0.8"/><rect x="10" y="6" width="25" height="2" fill="#1515ff" opacity="0.8"/><rect x="35" y="6" width="1" height="2" fill="#ff1010" opacity="0.8"/><rect x="36" y="6" width="10" height="2" fill="#1515ff" opacity="0.8"/><rect x="46" y="6" width="1" height="2" fill="#ff1010" opacity="0.8"/><rect x="48" y="6" width="11" height="2" fill="#1515ff" opacity="0.8"/><rect x="60" y="6" width="1" height="2" fill="#ff1010" opacity="0.8"/><rect x="62" y="6" width="3" height="2" fill="#222222" opacity="0.7"/><rect x="65" y="6" width="1" height="2" fill="#ff1010" opacity="0.8"/><rect x="67" y="6" width="7" height="2" fill="#ff1010" opacity="0.8"/><rect x="4" y="10" width="4" height="2" fill="#ff1010" opacity="0.8"/><rect x="9" y="10" width="12" height="2" fill="#1515ff" opacity="0.8"/><rect x="21" y="10" width="1" height="2" fill="#ff1010" opacity="0.8"/><rect x="22" y="10" width="10" height="2" fill="#1515ff" opacity="0.8"/><rect x="32" y="10" width="1" height="2" fill="#ff1010" opacity="0.8"/><rect x="34" y="10" width="5" height="2" fill="#ff1010" opacity="0.8"/><rect x="8" y="12" width="17" height="2" fill="#ff1010" opacity="0.8"/><rect x="26" y="12" width="3" height="2" fill="#222222" opacity="0.7"/><rect x="30" y="12" width="5" height="2" fill="#222222" opacity="0.7"/><rect x="36" y="12" width="4" height="2" fill="#222222" opacity="0.7"/><rect x="41" y="12" width="1" height="2" fill="#222222" opacity="0.7"/><rect x="43" y="12" width="5" height="2" fill="#222222" opacity="0.7"/><rect x="49" y="12" width="5" height="2" fill="#222222" opacity="0.7"/><rect x="54" y="12" width="1" height="2" fill="#ff1010" opacity="0.8"/><rect x="4" y="14" width="10" height="2" fill="#ff1010" opacity="0.8"/><rect x="4" y="18" width="12" height="2" fill="#1515ff" opacity="0.8"/><rect x="17" y="18" width="1" height="2" fill="#ff1010" opacity="0.8"/><rect x="4" y="20" width="8" height="2" fill="#222222" opacity="0.7"/><rect x="4" y="22" width="1" height="2" fill="#222222" opacity="0.7"/><rect x="9" y="22" width="20" height="2" fill="#222222" opacity="0.7"/><rect x="4" y="24" width="1" height="2" fill="#222222" opacity="0.7"/><rect x="9" y="24" width="17" height="2" fill="#222222" opacity="0.7"/><rect x="4" y="26" width="1" height="2" fill="#222222" opacity="0.7"/><rect x="9" y="26" width="26" height="2" fill="#222222" opacity="0.7"/><rect x="4" y="28" width="1" height="2" fill="#222222" opacity="0.7"/><rect x="9" y="28" width="21" height="2" fill="#222222" opacity="0.7"/><rect x="4" y="30" width="1" height="2" fill="#222222" opacity="0.7"/><rect x="9" y="30" width="32" height="2" fill="#222222" opacity="0.7"/><rect x="4" y="32" width="1" height="2" fill="#222222" opacity="0.7"/><rect x="9" y="32" width="30" height="2" fill="#222222" opacity="0.7"/><rect x="4" y="34" width="1" height="2" fill="#222222" opacity="0.7"/><rect x="9" y="34" width="23" height="2" fill="#222222" opacity="0.7"/><rect x="4" y="36" width="1" height="2" fill="#222222" opacity="0.7"/><rect x="9" y="36" width="21" height="2" fill="#222222" opacity="0.7"/><rect x="4" y="38" width="1" height="2" fill="#222222" opacity="0.7"/><rect x="9" y="38" width="34" height="2" fill="#222222" opacity="0.7"/><rect x="4" y="40" width="1" height="2" fill="#222222" opacity="0.7"/><rect x="9" y="40" width="42" height="2" fill="#222222" opacity="0.7"/><rect x="4" y="42" width="1" height="2" fill="#222222" opacity="0.7"/><rect x="9" y="42" width="34" height="2" fill="#222222" opacity="0.7"/><rect x="4" y="44" width="3" height="2" fill="#222222" opacity="0.7"/><rect x="4" y="46" width="1" height="2" fill="#222222" opacity="0.7"/><rect x="9" y="46" width="23" height="2" fill="#222222" opacity="0.7"/><rect x="33" y="46" width="3" height="2" fill="#222222" opacity="0.7"/><rect x="37" y="46" width="12" height="2" fill="#222222" opacity="0.7"/><rect x="4" y="48" width="4" height="2" fill="#222222" opacity="0.7"/><rect x="4" y="50" width="1" height="2" fill="#222222" opacity="0.7"/><rect x="9" y="50" width="2" height="2" fill="#222222" opacity="0.7"/><rect x="12" y="50" width="28" height="2" fill="#222222" opacity="0.7"/><rect x="4" y="52" width="12" height="2" fill="#222222" opacity="0.7"/><rect x="17" y="52" width="2" height="2" fill="#222222" opacity="0.7"/><rect x="4" y="54" width="1" height="2" fill="#222222" opacity="0.7"/><rect x="9" y="54" width="26" height="2" fill="#222222" opacity="0.7"/><rect x="35" y="54" width="1" height="2" fill="#ff1010" opacity="0.8"/><rect x="4" y="58" width="6" height="2" fill="#1515ff" opacity="0.8"/><rect x="11" y="58" width="1" height="2" fill="#ff1010" opacity="0.8"/><rect x="13" y="58" width="5" height="2" fill="#ff1010" opacity="0.8"/><rect x="19" y="58" width="6" height="2" fill="#1515ff" opacity="0.8"/><rect x="25" y="58" width="1" height="2" fill="#ff1010" opacity="0.8"/><rect x="4" y="60" width="6" height="2" fill="#1515ff" opacity="0.8"/><rect x="10" y="60" width="1" height="2" fill="#ff1010" opacity="0.8"/><rect x="11" y="60" width="5" height="2" fill="#1515ff" opacity="0.8"/><rect x="17" y="60" width="1" height="2" fill="#ff1010" opacity="0.8"/><rect x="19" y="60" width="12" height="2" fill="#1515ff" opacity="0.8"/><rect x="31" y="60" width="1" height="2" fill="#ff1010" opacity="0.8"/><rect x="4" y="64" width="7" height="2" fill="#1515ff" opacity="0.8"/><rect x="12" y="64" width="1" height="2" fill="#ff1010" opacity="0.8"/><rect x="14" y="64" width="6" height="2" fill="#1515ff" opacity="0.8"/><rect x="20" y="64" width="1" height="2" fill="#ff1010" opacity="0.8"/><rect x="21" y="64" width="9" height="2" fill="#1515ff" opacity="0.8"/><rect x="30" y="64" width="3" height="2" fill="#ff1010" opacity="0.8"/><rect x="33" y="64" width="7" height="2" fill="#1515ff" opacity="0.8"/><rect x="40" y="64" width="3" height="2" fill="#ff1010" opacity="0.8"/><rect x="4" y="68" width="6" height="2" fill="#1515ff" opacity="0.8"/><rect x="11" y="68" width="1" height="2" fill="#ff1010" opacity="0.8"/><rect x="13" y="68" width="5" height="2" fill="#ff1010" opacity="0.8"/><rect x="19" y="68" width="12" height="2" fill="#1515ff" opacity="0.8"/><rect x="31" y="68" width="1" height="2" fill="#ff1010" opacity="0.8"/><rect x="4" y="70" width="6" height="2" fill="#1515ff" opacity="0.8"/><rect x="10" y="70" width="1" height="2" fill="#ff1010" opacity="0.8"/><rect x="11" y="70" width="7" height="2" fill="#1515ff" opacity="0.8"/><rect x="18" y="70" width="1" height="2" fill="#ff1010" opacity="0.8"/><rect x="19" y="70" width="10" height="2" fill="#1515ff" opacity="0.8"/><rect x="29" y="70" width="1" height="2" fill="#ff1010" opacity="0.8"/><rect x="31" y="70" width="15" height="2" fill="#1515ff" opacity="0.8"/><rect x="46" y="70" width="1" height="2" fill="#ff1010" opacity="0.8"/><rect x="47" y="70" width="4" height="2" fill="#1515ff" opacity="0.8"/><rect x="51" y="70" width="1" height="2" fill="#ff1010" opacity="0.8"/><rect x="53" y="70" width="1" height="2" fill="#ff1010" opacity="0.8"/><rect x="55" y="70" width="6" height="2" fill="#ff1010" opacity="0.8"/><rect x="4" y="74" width="7" height="2" fill="#ff1010" opacity="0.8"/><rect x="8" y="76" width="2" height="2" fill="#1f8f1f" opacity="0.8"/><rect x="11" y="76" width="9" height="2" fill="#1f8f1f" opacity="0.8"/><rect x="8" y="78" width="6" height="2" fill="#1515ff" opacity="0.8"/><rect x="14" y="78" width="1" height="2" fill="#ff1010" opacity="0.8"/><rect x="15" y="78" width="14" height="2" fill="#1515ff" opacity="0.8"/><rect x="29" y="78" width="1" height="2" fill="#ff1010" opacity="0.8"/><rect x="12" y="80" width="8" height="2" fill="#222222" opacity="0.7"/><rect x="21" y="80" width="1" height="2" fill="#ff1010" opacity="0.8"/><rect x="23" y="80" width="11" height="2" fill="#1515ff" opacity="0.8"/><rect x="35" y="80" width="1" height="2" fill="#ff1010" opacity="0.8"/><rect x="12" y="82" width="5" height="2" fill="#222222" opacity="0.7"/><rect x="18" y="82" width="1" height="2" fill="#ff1010" opacity="0.8"/><rect x="20" y="82" width="11" height="2" fill="#1515ff" opacity="0.8"/><rect x="32" y="82" width="1" height="2" fill="#ff1010" opacity="0.8"/><rect x="12" y="84" width="14" height="2" fill="#222222" opacity="0.7"/><rect x="27" y="84" width="1" height="2" fill="#ff1010" opacity="0.8"/><rect x="29" y="84" width="11" height="2" fill="#1515ff" opacity="0.8"/><rect x="41" y="84" width="1" height="2" fill="#ff1010" opacity="0.8"/><rect x="12" y="86" width="9" height="2" fill="#222222" opacity="0.7"/><rect x="22" y="86" width="1" height="2" fill="#ff1010" opacity="0.8"/><rect x="24" y="86" width="11" height="2" fill="#1515ff" opacity="0.8"/><rect x="36" y="86" width="1" height="2" fill="#ff1010" opacity="0.8"/><rect x="12" y="88" width="20" height="2" fill="#222222" opacity="0.7"/><rect x="33" y="88" width="1" height="2" fill="#ff1010" opacity="0.8"/><rect x="35" y="88" width="11" height="2" fill="#1515ff" opacity="0.8"/><rect x="47" y="88" width="1" height="2" fill="#ff1010" opacity="0.8"/><rect x="12" y="90" width="18" height="2" fill="#222222" opacity="0.7"/><rect x="31" y="90" width="1" height="2" fill="#ff1010" opacity="0.8"/><rect x="33" y="90" width="11" height="2" fill="#1515ff" opacity="0.8"/><rect x="45" y="90" width="1" height="2" fill="#ff1010" opacity="0.8"/><rect x="12" y="92" width="11" height="2" fill="#222222" opacity="0.7"/><rect x="24" y="92" width="1" height="2" fill="#ff1010" opacity="0.8"/><rect x="26" y="92" width="11" height="2" fill="#1515ff" opacity="0.8"/><rect x="38" y="92" width="1" height="2" fill="#ff1010" opacity="0.8"/><rect x="12" y="94" width="9" height="2" fill="#222222" opacity="0.7"/><rect x="22" y="94" width="1" height="2" fill="#ff1010" opacity="0.8"/><rect x="24" y="94" width="11" height="2" fill="#1515ff" opacity="0.8"/><rect x="36" y="94" width="1" height="2" fill="#ff1010" opacity="0.8"/><rect x="12" y="96" width="22" height="2" fill="#222222" opacity="0.7"/><rect x="35" y="96" width="1" height="2" fill="#ff1010" opacity="0.8"/><rect x="37" y="96" width="11" height="2" fill="#1515ff" opacity="0.8"/><rect x="49" y="96" width="1" height="2" fill="#ff1010" opacity="0.8"/><rect x="12" y="98" width="30" height="2" fill="#222222" opacity="0.7"/><rect x="43" y="98" width="1" height="2" fill="#ff1010" opacity="0.8"/><rect x="45" y="98" width="11" height="2" fill="#1515ff" opacity="0.8"/><rect x="57" y="98" width="1" height="2" fill="#ff1010" opacity="0.8"/><rect x="12" y="100" width="23" height="2" fill="#222222" opacity="0.7"/><rect x="35" y="100" width="2" height="2" fill="#ff1010" opacity="0.8"/><rect x="8" y="104" width="4" height="2" fill="#ff1010" opacity="0.8"/><rect x="13" y="104" width="7" height="2" fill="#1515ff" opacity="0.8"/><rect x="20" y="104" width="1" height="2" fill="#ff1010" opacity="0.8"/><rect x="21" y="104" width="9" height="2" fill="#1515ff" opacity="0.8"/><rect x="30" y="104" width="2" height="2" fill="#ff1010" opacity="0.8"/><rect x="33" y="104" width="4" height="2" fill="#ff1010" opacity="0.8"/><rect x="12" y="106" width="9" height="2" fill="#1515ff" opacity="0.8"/><rect x="22" y="106" width="1" height="2" fill="#ff1010" opacity="0.8"/><rect x="24" y="106" width="9" height="2" fill="#1515ff" opacity="0.8"/><rect x="34" y="106" width="1" height="2" fill="#ff1010" opacity="0.8"/><rect x="36" y="106" width="11" height="2" fill="#1515ff" opacity="0.8"/><rect x="47" y="106" width="1" height="2" fill="#ff1010" opacity="0.8"/><rect x="48" y="106" width="7" height="2" fill="#1515ff" opacity="0.8"/><rect x="55" y="106" width="1" height="2" fill="#ff1010" opacity="0.8"/><rect x="56" y="106" width="6" height="2" fill="#1515ff" opacity="0.8"/><rect x="62" y="106" width="1" height="2" fill="#ff1010" opacity="0.8"/><rect x="64" y="106" width="11" height="2" fill="#1515ff" opacity="0.8"/><rect x="75" y="106" width="1" height="2" fill="#ff1010" opacity="0.8"/><rect x="77" y="106" width="1" height="2" fill="#ff1010" opacity="0.8"/><rect x="79" y="106" width="11" height="2" fill="#1515ff" opacity="0.8"/><rect x="91" y="106" width="1" height="2" fill="#ff1010" opacity="0.8"/><rect x="12" y="108" width="9" height="2" fill="#1515ff" opacity="0.8"/><rect x="22" y="108" width="1" height="2" fill="#ff1010" opacity="0.8"/><rect x="24" y="108" width="9" height="2" fill="#1515ff" opacity="0.8"/><rect x="34" y="108" width="1" height="2" fill="#ff1010" opacity="0.8"/><rect x="36" y="108" width="11" height="2" fill="#1515ff" opacity="0.8"/><rect x="47" y="108" width="1" height="2" fill="#ff1010" opacity="0.8"/><rect x="48" y="108" width="7" height="2" fill="#1515ff" opacity="0.8"/><rect x="55" y="108" width="1" height="2" fill="#ff1010" opacity="0.8"/><rect x="56" y="108" width="3" height="2" fill="#1515ff" opacity="0.8"/><rect x="59" y="108" width="1" height="2" fill="#ff1010" opacity="0.8"/><rect x="61" y="108" width="11" height="2" fill="#1515ff" opacity="0.8"/><rect x="72" y="108" width="1" height="2" fill="#ff1010" opacity="0.8"/><rect x="74" y="108" width="1" height="2" fill="#ff1010" opacity="0.8"/><rect x="76" y="108" width="11" height="2" fill="#1515ff" opacity="0.8"/><rect x="88" y="108" width="1" height="2" fill="#ff1010" opacity="0.8"/><rect x="12" y="110" width="9" height="2" fill="#1515ff" opacity="0.8"/><rect x="22" y="110" width="1" height="2" fill="#ff1010" opacity="0.8"/><rect x="24" y="110" width="9" height="2" fill="#1515ff" opacity="0.8"/><rect x="34" y="110" width="1" height="2" fill="#ff1010" opacity="0.8"/><rect x="36" y="110" width="11" height="2" fill="#1515ff" opacity="0.8"/><rect x="47" y="110" width="1" height="2" fill="#ff1010" opacity="0.8"/><rect x="48" y="110" width="7" height="2" fill="#1515ff" opacity="0.8"/><rect x="55" y="110" width="1" height="2" fill="#ff1010" opacity="0.8"/><rect x="56" y="110" width="8" height="2" fill="#1515ff" opacity="0.8"/><rect x="64" y="110" width="1" height="2" fill="#ff1010" opacity="0.8"/><rect x="66" y="110" width="11" height="2" fill="#1515ff" opacity="0.8"/><rect x="77" y="110" width="1" height="2" fill="#ff1010" opacity="0.8"/><rect x="79" y="110" width="1" height="2" fill="#ff1010" opacity="0.8"/><rect x="81" y="110" width="11" height="2" fill="#1515ff" opacity="0.8"/><rect x="93" y="110" width="1" height="2" fill="#ff1010" opacity="0.8"/><rect x="12" y="112" width="9" height="2" fill="#1515ff" opacity="0.8"/><rect x="22" y="112" width="1" height="2" fill="#ff1010" opacity="0.8"/><rect x="24" y="112" width="9" height="2" fill="#1515ff" opacity="0.8"/><rect x="34" y="112" width="1" height="2" fill="#ff1010" opacity="0.8"/><rect x="36" y="112" width="11" height="2" fill="#1515ff" opacity="0.8"/><rect x="47" y="112" width="1" height="2" fill="#ff1010" opacity="0.8"/><rect x="48" y="112" width="7" height="2" fill="#1515ff" opacity="0.8"/><rect x="55" y="112" width="1" height="2" fill="#ff1010" opacity="0.8"/><rect x="56" y="112" width="12" height="2" fill="#1515ff" opacity="0.8"/><rect x="68" y="112" width="1" height="2" fill="#ff1010" opacity="0.8"/><rect x="70" y="112" width="11" height="2" fill="#1515ff" opacity="0.8"/><rect x="81" y="112" width="1" height="2" fill="#ff1010" opacity="0.8"/><rect x="83" y="112" width="1" height="2" fill="#ff1010" opacity="0.8"/><rect x="85" y="112" width="11" height="2" fill="#1515ff" opacity="0.8"/><rect x="97" y="112" width="1" height="2" fill="#ff1010" opacity="0.8"/><rect x="12" y="114" width="9" height="2" fill="#1515ff" opacity="0.8"/><rect x="22" y="114" width="1" height="2" fill="#ff1010" opacity="0.8"/><rect x="24" y="114" width="9" height="2" fill="#1515ff" opacity="0.8"/><rect x="34" y="114" width="1" height="2" fill="#ff1010" opacity="0.8"/><rect x="36" y="114" width="11" height="2" fill="#1515ff" opacity="0.8"/><rect x="47" y="114" width="1" height="2" fill="#ff1010" opacity="0.8"/><rect x="48" y="114" width="7" height="2" fill="#1515ff" opacity="0.8"/><rect x="55" y="114" width="1" height="2" fill="#ff1010" opacity="0.8"/><rect x="56" y="114" width="7" height="2" fill="#1515ff" opacity="0.8"/><rect x="63" y="114" width="1" height="2" fill="#ff1010" opacity="0.8"/><rect x="65" y="114" width="11" height="2" fill="#1515ff" opacity="0.8"/><rect x="76" y="114" width="1" height="2" fill="#ff1010" opacity="0.8"/><rect x="78" y="114" width="1" height="2" fill="#ff1010" opacity="0.8"/><rect x="80" y="114" width="11" height="2" fill="#1515ff" opacity="0.8"/><rect x="92" y="114" width="1" height="2" fill="#ff1010" opacity="0.8"/><rect x="12" y="116" width="9" height="2" fill="#1515ff" opacity="0.8"/><rect x="22" y="116" width="1" height="2" fill="#ff1010" opacity="0.8"/><rect x="24" y="116" width="9" height="2" fill="#1515ff" opacity="0.8"/><rect x="34" y="116" width="1" height="2" fill="#ff1010" opacity="0.8"/><rect x="36" y="116" width="11" height="2" fill="#1515ff" opacity="0.8"/><rect x="47" y="116" width="1" height="2" fill="#ff1010" opacity="0.8"/><rect x="48" y="116" width="7" height="2" fill="#1515ff" opacity="0.8"/><rect x="55" y="116" width="1" height="2" fill="#ff1010" opacity="0.8"/><rect x="56" y="116" width="18" height="2" fill="#1515ff" opacity="0.8"/><rect x="74" y="116" width="1" height="2" fill="#ff1010" opacity="0.8"/><rect x="76" y="116" width="11" height="2" fill="#1515ff" opacity="0.8"/><rect x="87" y="116" width="1" height="2" fill="#ff1010" opacity="0.8"/><rect x="89" y="116" width="1" height="2" fill="#ff1010" opacity="0.8"/><rect x="91" y="116" width="11" height="2" fill="#1515ff" opacity="0.8"/><rect x="103" y="116" width="1" height="2" fill="#ff1010" opacity="0.8"/><rect x="12" y="118" width="9" height="2" fill="#1515ff" opacity="0.8"/><rect x="22" y="118" width="1" height="2" fill="#ff1010" opacity="0.8"/><rect x="24" y="118" width="9" height="2" fill="#1515ff" opacity="0.8"/><rect x="34" y="118" width="1" height="2" fill="#ff1010" opacity="0.8"/><rect x="36" y="118" width="11" height="2" fill="#1515ff" opacity="0.8"/><rect x="47" y="118" width="1" height="2" fill="#ff1010" opacity="0.8"/><rect x="48" y="118" width="7" height="2" fill="#1515ff" opacity="0.8"/><rect x="55" y="118" width="1" height="2" fill="#ff1010" opacity="0.8"/><rect x="56" y="118" width="16" height="2" fill="#1515ff" opacity="0.8"/><rect x="72" y="118" width="1" height="2" fill="#ff1010" opacity="0.8"/><rect x="74" y="118" width="11" height="2" fill="#1515ff" opacity="0.8"/><rect x="85" y="118" width="1" height="2" fill="#ff1010" opacity="0.8"/><rect x="87" y="118" width="1" height="2" fill="#ff1010" opacity="0.8"/><rect x="89" y="118" width="11" height="2" fill="#1515ff" opacity="0.8"/><rect x="101" y="118" width="1" height="2" fill="#ff1010" opacity="0.8"/><rect x="12" y="120" width="9" height="2" fill="#1515ff" opacity="0.8"/><rect x="22" y="120" width="1" height="2" fill="#ff1010" opacity="0.8"/><rect x="24" y="120" width="9" height="2" fill="#1515ff" opacity="0.8"/><rect x="34" y="120" width="1" height="2" fill="#ff1010" opacity="0.8"/><rect x="36" y="120" width="11" height="2" fill="#1515ff" opacity="0.8"/><rect x="47" y="120" width="1" height="2" fill="#ff1010" opacity="0.8"/><rect x="48" y="120" width="7" height="2" fill="#1515ff" opacity="0.8"/><rect x="55" y="120" width="1" height="2" fill="#ff1010" opacity="0.8"/><rect x="56" y="120" width="9" height="2" fill="#1515ff" opacity="0.8"/><rect x="65" y="120" width="1" height="2" fill="#ff1010" opacity="0.8"/><rect x="67" y="120" width="11" height="2" fill="#1515ff" opacity="0.8"/><rect x="78" y="120" width="1" height="2" fill="#ff1010" opacity="0.8"/><rect x="80" y="120" width="1" height="2" fill="#ff1010" opacity="0.8"/><rect x="82" y="120" width="11" height="2" fill="#1515ff" opacity="0.8"/><rect x="94" y="120" width="1" height="2" fill="#ff1010" opacity="0.8"/><rect x="12" y="122" width="9" height="2" fill="#1515ff" opacity="0.8"/><rect x="22" y="122" width="1" height="2" fill="#ff1010" opacity="0.8"/><rect x="24" y="122" width="9" height="2" fill="#1515ff" opacity="0.8"/><rect x="34" y="122" width="1" height="2" fill="#ff1010" opacity="0.8"/><rect x="36" y="122" width="11" height="2" fill="#1515ff" opacity="0.8"/><rect x="47" y="122" width="1" height="2" fill="#ff1010" opacity="0.8"/><rect x="48" y="122" width="7" height="2" fill="#1515ff" opacity="0.8"/><rect x="55" y="122" width="1" height="2" fill="#ff1010" opacity="0.8"/><rect x="56" y="122" width="7" height="2" fill="#1515ff" opacity="0.8"/><rect x="63" y="122" width="1" height="2" fill="#ff1010" opacity="0.8"/><rect x="65" y="122" width="11" height="2" fill="#1515ff" opacity="0.8"/><rect x="76" y="122" width="1" height="2" fill="#ff1010" opacity="0.8"/><rect x="78" y="122" width="1" height="2" fill="#ff1010" opacity="0.8"/><rect x="80" y="122" width="11" height="2" fill="#1515ff" opacity="0.8"/><rect x="92" y="122" width="1" height="2" fill="#ff1010" opacity="0.8"/><rect x="12" y="124" width="9" height="2" fill="#1515ff" opacity="0.8"/><rect x="22" y="124" width="1" height="2" fill="#ff1010" opacity="0.8"/><rect x="24" y="124" width="9" height="2" fill="#1515ff" opacity="0.8"/><rect x="34" y="124" width="1" height="2" fill="#ff1010" opacity="0.8"/><rect x="36" y="124" width="11" height="2" fill="#1515ff" opacity="0.8"/><rect x="47" y="124" width="1" height="2" fill="#ff1010" opacity="0.8"/><rect x="48" y="124" width="7" height="2" fill="#1515ff" opacity="0.8"/><rect x="55" y="124" width="1" height="2" fill="#ff1010" opacity="0.8"/><rect x="56" y="124" width="20" height="2" fill="#1515ff" opacity="0.8"/><rect x="76" y="124" width="1" height="2" fill="#ff1010" opacity="0.8"/><rect x="78" y="124" width="11" height="2" fill="#1515ff" opacity="0.8"/><rect x="89" y="124" width="1" height="2" fill="#ff1010" opacity="0.8"/><rect x="91" y="124" width="1" height="2" fill="#ff1010" opacity="0.8"/><rect x="93" y="124" width="11" height="2" fill="#1515ff" opacity="0.8"/><rect x="105" y="124" width="1" height="2" fill="#ff1010" opacity="0.8"/><rect x="12" y="126" width="9" height="2" fill="#1515ff" opacity="0.8"/><rect x="22" y="126" width="1" height="2" fill="#ff1010" opacity="0.8"/><rect x="24" y="126" width="9" height="2" fill="#1515ff" opacity="0.8"/><rect x="34" y="126" width="1" height="2" fill="#ff1010" opacity="0.8"/><rect x="36" y="126" width="11" height="2" fill="#1515ff" opacity="0.8"/><rect x="47" y="126" width="1" height="2" fill="#ff1010" opacity="0.8"/><rect x="48" y="126" width="7" height="2" fill="#1515ff" opacity="0.8"/><rect x="55" y="126" width="1" height="2" fill="#ff1010" opacity="0.8"/><rect x="56" y="126" width="28" height="2" fill="#1515ff" opacity="0.8"/><rect x="84" y="126" width="1" height="2" fill="#ff1010" opacity="0.8"/><rect x="86" y="126" width="11" height="2" fill="#1515ff" opacity="0.8"/><rect x="97" y="126" width="1" height="2" fill="#ff1010" opacity="0.8"/><rect x="99" y="126" width="1" height="2" fill="#ff1010" opacity="0.8"/><rect x="101" y="126" width="11" height="2" fill="#1515ff" opacity="0.8"/><rect x="113" y="126" width="1" height="2" fill="#ff1010" opacity="0.8"/><rect x="12" y="128" width="9" height="2" fill="#1515ff" opacity="0.8"/><rect x="22" y="128" width="1" height="2" fill="#ff1010" opacity="0.8"/><rect x="24" y="128" width="9" height="2" fill="#1515ff" opacity="0.8"/><rect x="34" y="128" width="1" height="2" fill="#ff1010" opacity="0.8"/><rect x="36" y="128" width="11" height="2" fill="#1515ff" opacity="0.8"/><rect x="47" y="128" width="1" height="2" fill="#ff1010" opacity="0.8"/><rect x="48" y="128" width="7" height="2" fill="#1515ff" opacity="0.8"/><rect x="55" y="128" width="1" height="2" fill="#ff1010" opacity="0.8"/><rect x="56" y="128" width="21" height="2" fill="#1515ff" opacity="0.8"/><rect x="77" y="128" width="1" height="2" fill="#ff1010" opacity="0.8"/><rect x="79" y="128" width="11" height="2" fill="#1515ff" opacity="0.8"/><rect x="90" y="128" width="2" height="2" fill="#ff1010" opacity="0.8"/><rect x="12" y="132" width="6" height="2" fill="#1515ff" opacity="0.8"/><rect x="18" y="132" width="1" height="2" fill="#ff1010" opacity="0.8"/><rect x="19" y="132" width="14" height="2" fill="#1515ff" opacity="0.8"/><rect x="33" y="132" width="1" height="2" fill="#ff1010" opacity="0.8"/><rect x="34" y="132" width="3" height="2" fill="#1515ff" opacity="0.8"/><rect x="37" y="132" width="2" height="2" fill="#ff1010" opacity="0.8"/><rect x="8" y="134" width="11" height="2" fill="#ff1010" opacity="0.8"/><rect x="4" y="136" width="10" height="2" fill="#ff1010" opacity="0.8"/><rect x="8" y="138" width="17" height="2" fill="#ff1010" opacity="0.8"/><rect x="26" y="138" width="14" height="2" fill="#1515ff" opacity="0.8"/><rect x="40" y="138" width="3" height="2" fill="#ff1010" opacity="0.8"/><rect x="4" y="140" width="13" height="2" fill="#ff1010" opacity="0.8"/><rect x="4" y="144" width="6" height="2" fill="#1515ff" opacity="0.8"/><rect x="10" y="144" width="1" height="2" fill="#ff1010" opacity="0.8"/><rect x="11" y="144" width="7" height="2" fill="#1515ff" opacity="0.8"/><rect x="18" y="144" width="3" height="2" fill="#ff1010" opacity="0.8"/><rect x="0" y="148" width="14" height="2" fill="#ff1010" opacity="0.8"/><rect x="0" y="152" width="7" height="2" fill="#ff1010" opacity="0.8"/><rect x="8" y="152" width="11" height="2" fill="#1515ff" opacity="0.8"/><rect x="19" y="152" width="1" height="2" fill="#ff1010" opacity="0.8"/><rect x="20" y="152" width="8" height="2" fill="#1515ff" opacity="0.8"/><rect x="28" y="152" width="1" height="2" fill="#ff1010" opacity="0.8"/><rect x="30" y="152" width="11" height="2" fill="#1515ff" opacity="0.8"/><rect x="41" y="152" width="1" height="2" fill="#ff1010" opacity="0.8"/><rect x="43" y="152" width="7" height="2" fill="#ff1010" opacity="0.8"/><rect x="4" y="156" width="4" height="2" fill="#ff1010" opacity="0.8"/><rect x="9" y="156" width="8" height="2" fill="#1515ff" opacity="0.8"/><rect x="18" y="156" width="1" height="2" fill="#ff1010" opacity="0.8"/><rect x="20" y="156" width="12" height="2" fill="#ff1010" opacity="0.8"/><rect x="33" y="156" width="5" height="2" fill="#ff1010" opacity="0.8"/><rect x="8" y="158" width="7" height="2" fill="#ff1010" opacity="0.8"/><rect x="16" y="158" width="2" height="2" fill="#222222" opacity="0.7"/><rect x="18" y="158" width="1" height="2" fill="#ff1010" opacity="0.8"/><rect x="4" y="160" width="10" height="2" fill="#ff1010" opacity="0.8"/><rect x="4" y="164" width="4" height="2" fill="#ff1010" opacity="0.8"/><rect x="9" y="164" width="6" height="2" fill="#1515ff" opacity="0.8"/><rect x="15" y="164" width="1" height="2" fill="#ff1010" opacity="0.8"/><rect x="16" y="164" width="8" height="2" fill="#1515ff" opacity="0.8"/><rect x="24" y="164" width="1" height="2" fill="#ff1010" opacity="0.8"/><rect x="26" y="164" width="1" height="2" fill="#ff1010" opacity="0.8"/><rect x="28" y="164" width="3" height="2" fill="#1515ff" opacity="0.8"/><rect x="31" y="164" width="1" height="2" fill="#ff1010" opacity="0.8"/><rect x="32" y="164" width="8" height="2" fill="#222222" opacity="0.7"/><rect x="40" y="164" width="1" height="2" fill="#ff1010" opacity="0.8"/><rect x="42" y="164" width="5" height="2" fill="#ff1010" opacity="0.8"/><rect x="8" y="166" width="7" height="2" fill="#ff1010" opacity="0.8"/><rect x="16" y="166" width="2" height="2" fill="#ff1010" opacity="0.8"/><rect x="18" y="166" width="8" height="2" fill="#1515ff" opacity="0.8"/><rect x="26" y="166" width="1" height="2" fill="#ff1010" opacity="0.8"/><rect x="28" y="166" width="3" height="2" fill="#222222" opacity="0.7"/><rect x="31" y="166" width="1" height="2" fill="#ff1010" opacity="0.8"/><rect x="33" y="166" width="3" height="2" fill="#222222" opacity="0.7"/><rect x="36" y="166" width="2" height="2" fill="#ff1010" opacity="0.8"/><rect x="4" y="168" width="9" height="2" fill="#ff1010" opacity="0.8"/><rect x="14" y="168" width="6" height="2" fill="#1515ff" opacity="0.8"/><rect x="20" y="168" width="1" height="2" fill="#ff1010" opacity="0.8"/><rect x="21" y="168" width="8" height="2" fill="#1515ff" opacity="0.8"/><rect x="29" y="168" width="1" height="2" fill="#ff1010" opacity="0.8"/><rect x="31" y="168" width="1" height="2" fill="#ff1010" opacity="0.8"/><rect x="33" y="168" width="3" height="2" fill="#1515ff" opacity="0.8"/><rect x="36" y="168" width="1" height="2" fill="#ff1010" opacity="0.8"/><rect x="37" y="168" width="6" height="2" fill="#222222" opacity="0.7"/><rect x="43" y="168" width="1" height="2" fill="#ff1010" opacity="0.8"/><rect x="45" y="168" width="5" height="2" fill="#ff1010" opacity="0.8"/><rect x="8" y="170" width="7" height="2" fill="#ff1010" opacity="0.8"/><rect x="16" y="170" width="6" height="2" fill="#1515ff" opacity="0.8"/><rect x="22" y="170" width="1" height="2" fill="#ff1010" opacity="0.8"/><rect x="23" y="170" width="8" height="2" fill="#1515ff" opacity="0.8"/><rect x="31" y="170" width="1" height="2" fill="#ff1010" opacity="0.8"/><rect x="33" y="170" width="15" height="2" fill="#222222" opacity="0.7"/><rect x="48" y="170" width="2" height="2" fill="#ff1010" opacity="0.8"/><rect x="4" y="172" width="5" height="2" fill="#ff1010" opacity="0.8"/><rect x="8" y="174" width="3" height="2" fill="#1515ff" opacity="0.8"/><rect x="12" y="174" width="1" height="2" fill="#ff1010" opacity="0.8"/><rect x="14" y="174" width="6" height="2" fill="#1515ff" opacity="0.8"/><rect x="20" y="174" width="1" height="2" fill="#ff1010" opacity="0.8"/><rect x="21" y="174" width="8" height="2" fill="#1515ff" opacity="0.8"/><rect x="29" y="174" width="2" height="2" fill="#ff1010" opacity="0.8"/><rect x="4" y="176" width="10" height="2" fill="#ff1010" opacity="0.8"/><rect x="4" y="180" width="3" height="2" fill="#1515ff" opacity="0.8"/><rect x="8" y="180" width="1" height="2" fill="#ff1010" opacity="0.8"/><rect x="10" y="180" width="11" height="2" fill="#1515ff" opacity="0.8"/><rect x="21" y="180" width="1" height="2" fill="#ff1010" opacity="0.8"/><rect x="22" y="180" width="3" height="2" fill="#1515ff" opacity="0.8"/><rect x="25" y="180" width="1" height="2" fill="#ff1010" opacity="0.8"/><rect x="27" y="180" width="4" height="2" fill="#222222" opacity="0.7"/><rect x="31" y="180" width="1" height="2" fill="#ff1010" opacity="0.8"/><rect x="33" y="180" width="6" height="2" fill="#222222" opacity="0.7"/><rect x="39" y="180" width="2" height="2" fill="#ff1010" opacity="0.8"/><rect x="4" y="184" width="4" height="2" fill="#ff1010" opacity="0.8"/><rect x="9" y="184" width="8" height="2" fill="#1515ff" opacity="0.8"/><rect x="17" y="184" width="1" height="2" fill="#ff1010" opacity="0.8"/><rect x="18" y="184" width="3" height="2" fill="#1515ff" opacity="0.8"/><rect x="21" y="184" width="1" height="2" fill="#ff1010" opacity="0.8"/><rect x="23" y="184" width="11" height="2" fill="#1515ff" opacity="0.8"/><rect x="34" y="184" width="1" height="2" fill="#ff1010" opacity="0.8"/><rect x="36" y="184" width="1" height="2" fill="#ff1010" opacity="0.8"/><rect x="38" y="184" width="1" height="2" fill="#1515ff" opacity="0.8"/><rect x="40" y="184" width="3" height="2" fill="#ff1010" opacity="0.8"/><rect x="44" y="184" width="8" height="2" fill="#1515ff" opacity="0.8"/><rect x="52" y="184" width="1" height="2" fill="#ff1010" opacity="0.8"/><rect x="53" y="184" width="3" height="2" fill="#1515ff" opacity="0.8"/><rect x="56" y="184" width="1" height="2" fill="#ff1010" opacity="0.8"/><rect x="58" y="184" width="7" height="2" fill="#1515ff" opacity="0.8"/><rect x="65" y="184" width="1" height="2" fill="#ff1010" opacity="0.8"/><rect x="66" y="184" width="2" height="2" fill="#1515ff" opacity="0.8"/><rect x="68" y="184" width="1" height="2" fill="#ff1010" opacity="0.8"/><rect x="70" y="184" width="1" height="2" fill="#ff1010" opacity="0.8"/><rect x="72" y="184" width="1" height="2" fill="#1515ff" opacity="0.8"/><rect x="74" y="184" width="3" height="2" fill="#ff1010" opacity="0.8"/><rect x="78" y="184" width="8" height="2" fill="#1515ff" opacity="0.8"/><rect x="86" y="184" width="1" height="2" fill="#ff1010" opacity="0.8"/><rect x="87" y="184" width="3" height="2" fill="#1515ff" opacity="0.8"/><rect x="90" y="184" width="1" height="2" fill="#ff1010" opacity="0.8"/><rect x="92" y="184" width="7" height="2" fill="#1515ff" opacity="0.8"/><rect x="99" y="184" width="1" height="2" fill="#ff1010" opacity="0.8"/><rect x="100" y="184" width="2" height="2" fill="#1515ff" opacity="0.8"/><rect x="102" y="184" width="1" height="2" fill="#ff1010" opacity="0.8"/><rect x="104" y="184" width="1" height="2" fill="#ff1010" opacity="0.8"/><rect x="106" y="184" width="1" height="2" fill="#1515ff" opacity="0.8"/><rect x="108" y="184" width="5" height="2" fill="#ff1010" opacity="0.8"/><rect x="8" y="186" width="3" height="2" fill="#1515ff" opacity="0.8"/><rect x="12" y="186" width="1" height="2" fill="#ff1010" opacity="0.8"/><rect x="14" y="186" width="4" height="2" fill="#222222" opacity="0.7"/><rect x="19" y="186" width="1" height="2" fill="#ff1010" opacity="0.8"/><rect x="21" y="186" width="3" height="2" fill="#1515ff" opacity="0.8"/><rect x="25" y="186" width="1" height="2" fill="#ff1010" opacity="0.8"/><rect x="27" y="186" width="4" height="2" fill="#222222" opacity="0.7"/><rect x="31" y="186" width="1" height="2" fill="#ff1010" opacity="0.8"/><rect x="4" y="188" width="10" height="2" fill="#ff1010" opacity="0.8"/><rect x="4" y="192" width="7" height="2" fill="#ff1010" opacity="0.8"/><rect x="12" y="192" width="3" height="2" fill="#1515ff" opacity="0.8"/><rect x="15" y="192" width="1" height="2" fill="#ff1010" opacity="0.8"/><rect x="0" y="196" width="12" height="2" fill="#ff1010" opacity="0.8"/><rect x="0" y="0" width="113" height="200" fill="url(#mmp)"/><rect x="0" y="26" width="113" height="2" fill="#9dc3ea" opacity=".45"/></svg>
<div style="left:1228px;top:664px;width:1235px;height:638px;background:#0f172a;border:1px solid #8d9096;border-right:0;box-sizing:border-box"></div>
<div style="left:2463px;top:686px;width:4px;height:595px;background:#fbfbfb"></div>
<div style="left:2463px;top:686px;width:4px;height:201px;background:#cdcdcd"></div>
<div style="left:1240px;top:676px;width:1212px;height:632px;border:1px solid #d9dde3;border-radius:4px;box-sizing:border-box;background:#0c1428"></div>
<div style="left:1241px;top:722px;width:1210px;height:1px;background:#d9dde3"></div>
<svg style="left:1250px;top:692px;" width="14" height="16" viewBox="0 0 14 16"><path d="M1.5,1.5 H8.5 L12.5,5.5 V14.5 H1.5 Z" fill="none" stroke="#aab2bf" stroke-width="1"/><path d="M3.5,6.5 H9.5 M3.5,8.5 H10.5 M3.5,10.5 H10.5 M3.5,12.5 H10.5" stroke="#aab2bf" stroke-width=".9"/></svg>
<span class="t" style="left:1273px;top:690.5px;font-family:'Liberation Sans',sans-serif;font-size:15px;line-height:18px;color:#b7bfcb;letter-spacing:-0.172px;">prev</span>
<svg style="left:1306px;top:693.6px;" width="16" height="10" viewBox="0 0 16 10"><path d="M1,5 H13.5 M10,2 L13.8,5 L10,8" fill="none" stroke="#b7bfcb" stroke-width="1.1"/></svg>
<span class="t" style="left:1325.5px;top:690.5px;font-family:'Liberation Sans',sans-serif;font-size:15px;line-height:18px;color:#b7bfcb;letter-spacing:-0.09px;">next</span>
<div style="left:1358px;top:693px;width:56px;height:14px;background:#fff;border:1px solid #4a79c9;box-sizing:border-box"></div>
<span class="t" style="left:1361px;top:693.5px;font-family:'Liberation Sans',sans-serif;font-size:10px;line-height:12px;color:#5a7cb8;letter-spacing:-0.145px;">RENAMED</span>
<div style="left:1241px;top:723px;width:1210px;height:17px;background:#1e293b"></div>
<div style="left:1241px;top:723px;width:98px;height:17px;background:#1e293b;border-right:1px solid #dfe6ee;border-left:1px solid #dfe6ee;box-sizing:border-box"></div>
<div style="left:1241px;top:740px;width:1210px;height:561px;overflow:hidden;background:#0a342d"><div style="left:0;top:0;width:98px;height:600px;background:repeating-linear-gradient(180deg,#11543a 0 17px,#0a3b28 17px 18px);border-right:1px solid #bdeccb;border-left:1px solid #bdeccb;box-sizing:border-box"></div><span class="dn" style="top:1px">1</span><span class="dl" style="top:1px">+ // Выгрузка справочника Номенклатура в CSV</span><span class="dn" style="top:19px">2</span><span class="dl" style="top:19px">+ // Конфигурация: Розница 2.3</span><span class="dn" style="top:37px">3</span><span class="dl" style="top:37px">+ </span><span class="dn" style="top:55px">4</span><span class="dl" style="top:55px">+ Процедура ВыгрузитьНоменклатуруВCSV(ПутьКФайлу, Разделитель = ";") Экспорт</span><span class="dn" style="top:73px">5</span><span class="dl" style="top:73px">+ </span><span class="dn" style="top:91px">6</span><span class="dl" style="top:91px">+         Если ПустаяСтрока(ПутьКФайлу) Тогда</span><span class="dn" style="top:109px">7</span><span class="dl" style="top:109px">+                 ВызватьИсключение "Не задан путь к файлу CSV.";</span><span class="dn" style="top:127px">8</span><span class="dl" style="top:127px">+         КонецЕсли;</span><span class="dn" style="top:145px">9</span><span class="dl" style="top:145px">+ </span><span class="dn" style="top:163px">10</span><span class="dl" style="top:163px">+         ТекстЗапроса =</span><span class="dn" style="top:181px">11</span><span class="dl" style="top:181px">+         "ВЫБРАТЬ</span><span class="dn" style="top:199px">12</span><span class="dl" style="top:199px">+         |    Номенклатура.Ссылка,</span><span class="dn" style="top:217px">13</span><span class="dl" style="top:217px">+         |    Номенклатура.Код,</span><span class="dn" style="top:235px">14</span><span class="dl" style="top:235px">+         |    Номенклатура.Наименование,</span><span class="dn" style="top:253px">15</span><span class="dl" style="top:253px">+         |    Номенклатура.Артикул,</span><span class="dn" style="top:271px">16</span><span class="dl" style="top:271px">+         |    Номенклатура.НаименованиеПолное,</span><span class="dn" style="top:289px">17</span><span class="dl" style="top:289px">+         |    Номенклатура.ЕдиницаИзмерения,</span><span class="dn" style="top:307px">18</span><span class="dl" style="top:307px">+         |    Номенклатура.СтавкаНДС,</span><span class="dn" style="top:325px">19</span><span class="dl" style="top:325px">+         |    Номенклатура.Весовой,</span><span class="dn" style="top:343px">20</span><span class="dl" style="top:343px">+         |    Номенклатура.АлкогольнаяПродукция,</span><span class="dn" style="top:361px">21</span><span class="dl" style="top:361px">+         |    Номенклатура.ПодконтрольнаяПродукцияВЕТИС,</span><span class="dn" style="top:379px">22</span><span class="dl" style="top:379px">+         |    Номенклатура.ДатаОкончанияДействия</span><span class="dn" style="top:397px">23</span><span class="dl" style="top:397px">+         |ИЗ</span><span class="dn" style="top:415px">24</span><span class="dl" style="top:415px">+         |    Справочник.Номенклатура КАК Номенклатура</span><span class="dn" style="top:433px">25</span><span class="dl" style="top:433px">+         |ГДЕ</span><span class="dn" style="top:451px">26</span><span class="dl" style="top:451px">+         |    НЕ Номенклатура.ПометкаУдаления</span><span class="dn" style="top:469px">27</span><span class="dl" style="top:469px">+         |УПОРЯДОЧИТЬ ПО</span><span class="dn" style="top:487px">28</span><span class="dl" style="top:487px">+         |    Номенклатура.Наименование";</span><span class="dn" style="top:505px">29</span><span class="dl" style="top:505px">+ </span><span class="dn" style="top:523px">30</span><span class="dl" style="top:523px">+         Запрос = Новый Запрос;</span><span class="dn" style="top:541px">31</span><span class="dl" style="top:541px">+         Запрос.Текст = ТекстЗапроса;</span></div>
<div style="left:1228px;top:1301px;width:1235px;height:1px;background:#8d9096"></div>
<div style="left:1226px;top:1302px;width:1243px;height:8px;background:#fff"></div>
<span class="t" style="left:1346px;top:723.5px;font-family:'Liberation Mono',monospace;font-size:13px;line-height:18px;color:#e6ebf2;">@@ -0,0 +1,99 @@</span>
</body></html>
